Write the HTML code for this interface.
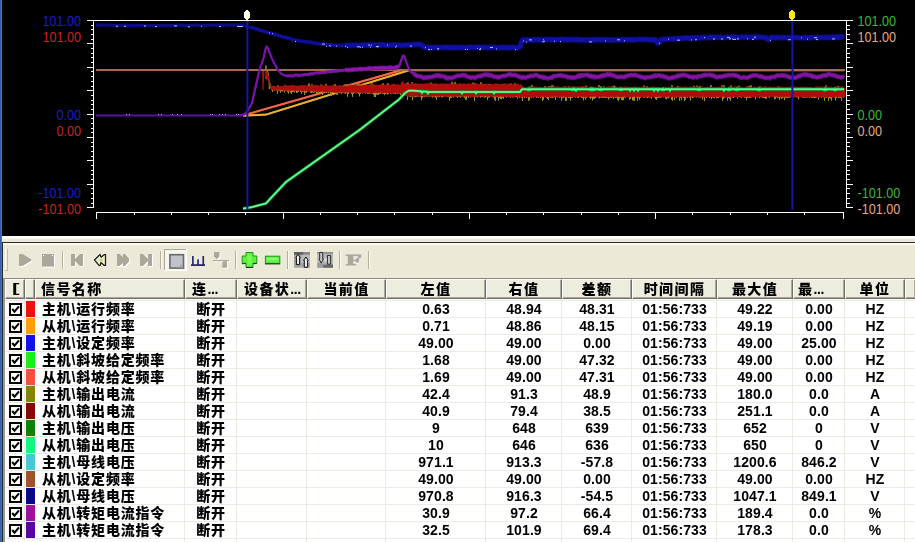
<!DOCTYPE html>
<html><head><meta charset="utf-8"><title>曲线</title>
<style>
html,body{margin:0;padding:0}
body{width:915px;height:542px;overflow:hidden;position:relative;background:#ece9d8;font-family:"Liberation Sans","Noto Sans CJK SC",sans-serif}
.abs{position:absolute}
.hc{position:absolute;top:279px;height:17px;box-sizing:border-box;height:20px;background:#eeebdf;border-top:1px solid #fff;border-left:1px solid #fff;border-right:1px solid #716f64;border-bottom:1px solid #716f64;box-shadow:inset -1px -1px 0 #aca899;font:900 14px/18px "Liberation Sans","Noto Sans CJK SC",sans-serif;letter-spacing:1.4px;color:#000;white-space:nowrap;overflow:hidden}
.gh{position:absolute;left:5px;right:0;height:1px;background:#ecebe1}
.gv{position:absolute;top:299px;bottom:0;width:1px;background:#ecebe1}
.row{position:absolute;left:0;width:915px;height:17px;font:bold 14px/17px "Liberation Sans","Noto Sans CJK SC",sans-serif;letter-spacing:.1px;color:#000;white-space:nowrap}
.cb{position:absolute;left:9px;top:3px;width:13px;height:13px;line-height:0}
.sw{position:absolute;left:26px;top:1px;width:9px;height:16px}
.nm{position:absolute;left:42px;top:1px;font-size:14px;letter-spacing:.8px;font-weight:900}
.c{position:absolute;top:1px;text-align:center}
.zh{font-size:14px;letter-spacing:.8px;font-weight:900}
</style></head><body>
<svg width="915" height="236" viewBox="0 0 915 236" style="position:absolute;left:0;top:0;display:block">
<rect width="915" height="236" fill="#000"/>
<g><polyline points="243.0,115.4 402.0,70.0 844.0,70.0" fill="none" stroke="#e02020" stroke-width="2" />
<polyline points="243.0,115.4 402.0,70.0 844.0,70.0" fill="none" stroke="#f2684c" stroke-width="2" />
<polyline points="243.0,115.8 266.0,114.6 409.0,70.2 844.0,70.2" fill="none" stroke="#30d030" stroke-width="1.6" />
<polyline points="243.0,115.8 266.0,114.6 409.0,70.2 844.0,70.2" fill="none" stroke="#ffa828" stroke-width="2" />
<polyline points="243.0,115.5 247.0,112.0 252.0,103.0 259.4,70.0 260.0,69.5 265.6,69.5 266.0,65.5 266.2,79.0 267.0,70.0 268.5,74.0 269.4,89.0 269.6,82.0 271.0,88.0 271.0,87.5 271.5,89.6 272.0,87.1 272.5,91.8 273.0,86.0 273.5,90.0 274.0,86.6 274.5,90.6 275.0,86.5 275.5,90.2 276.0,87.3 276.5,90.1 277.0,86.9 277.5,93.4 278.0,85.3 278.5,90.4 279.0,87.2 279.5,90.8 280.0,86.8 280.5,92.5 281.0,86.9 281.5,91.0 282.0,86.6 282.5,91.3 283.0,86.9 283.5,90.2 284.0,86.4 284.5,92.3 285.0,84.8 285.5,91.0 286.0,86.8 286.5,91.1 287.0,86.6 287.5,91.7 288.0,86.4 288.5,93.5 289.0,86.0 289.5,90.8 290.0,86.3 290.5,92.5 291.0,86.6 291.5,93.9 292.0,86.1 292.5,91.8 293.0,85.4 293.5,91.8 294.0,86.1 294.5,92.4 295.0,86.1 295.5,90.8 296.0,86.1 296.5,92.8 297.0,86.7 297.5,92.5 298.0,86.4 298.5,91.7 299.0,86.3 299.5,90.8 300.0,86.1 300.5,91.9 301.0,86.5 301.5,93.6 302.0,86.7 302.5,91.5 303.0,86.8 303.5,91.5 304.0,85.6 304.5,94.8 305.0,86.7 305.5,92.5 306.0,86.8 306.5,92.4 307.0,86.4 307.5,91.4 308.0,86.6 308.5,91.2 309.0,83.5 309.5,91.3 310.0,86.8 310.5,92.5 311.0,86.2 311.5,92.8 312.0,84.2 312.5,92.3 313.0,86.6 313.5,92.7 314.0,86.1 314.5,92.3 315.0,86.3 315.5,91.3 316.0,85.9 316.5,94.4 317.0,86.4 317.5,92.8 318.0,86.5 318.5,92.4 319.0,86.1 319.5,92.8 320.0,86.4 320.5,92.6 321.0,84.5 321.5,92.7 322.0,86.4 322.5,95.1 323.0,86.0 323.5,92.2 324.0,85.9 324.5,91.9 325.0,86.3 325.5,92.8 326.0,83.9 326.5,92.7 327.0,86.3 327.5,91.8 328.0,86.2 328.5,93.2 329.0,86.0 329.5,92.1 330.0,86.5 330.5,94.5 331.0,86.4 331.5,96.0 332.0,86.4 332.5,93.3 333.0,85.9 333.5,92.7 334.0,86.8 334.5,92.2 335.0,84.0 335.5,94.1 336.0,86.3 336.5,94.4 337.0,86.0 337.5,94.6 338.0,86.5 338.5,92.9 339.0,86.0 339.5,92.8 340.0,86.3 340.5,93.2 341.0,86.3 341.5,93.6 342.0,85.9 342.5,92.6 343.0,85.8 343.5,92.4 344.0,85.2 344.5,93.3 345.0,84.4 345.5,93.6 346.0,84.2 346.5,92.5 347.0,85.7 347.5,96.6 348.0,86.2 348.5,93.6 349.0,85.2 349.5,92.8 350.0,85.6 350.5,92.4 351.0,86.2 351.5,93.8 352.0,86.1 352.5,96.8 353.0,85.7 353.5,93.6 354.0,83.9 354.5,93.0 355.0,85.7 355.5,92.8 356.0,83.4 356.5,93.5 357.0,86.4 357.5,93.1 358.0,83.3 358.5,93.6 359.0,83.5 359.5,96.3 360.0,86.2 360.5,93.9 361.0,86.4 361.5,92.8 362.0,85.9 362.5,93.4 363.0,86.2 363.5,92.9 364.0,86.3 364.5,92.6 365.0,86.5 365.5,93.4 366.0,84.8 366.5,92.7 367.0,86.0 367.5,93.8 368.0,85.9 368.5,94.0 369.0,85.6 369.5,93.5 370.0,86.1 370.5,93.2 371.0,83.8 371.5,93.3 372.0,83.4 372.5,93.6 373.0,86.1 373.5,94.7 374.0,84.8 374.5,97.0 375.0,85.8 375.5,97.0 376.0,86.0 376.5,94.4 377.0,85.8 377.5,95.0 378.0,85.4 378.5,94.5 379.0,86.2 379.5,93.8 380.0,85.7 380.5,93.7 381.0,85.4 381.5,93.2 382.0,86.1 382.5,93.7 383.0,83.3 383.5,93.7 384.0,85.4 384.5,95.1 385.0,85.4 385.5,94.0 386.0,85.3 386.5,93.9 387.0,86.1 387.5,94.4 388.0,83.2 388.5,93.8 389.0,85.5 389.5,92.9 390.0,85.4 390.5,93.7 391.0,86.1 391.5,93.3 392.0,85.2 392.5,93.2 393.0,85.1 393.5,93.5 394.0,85.4 394.5,93.8 395.0,86.0 395.5,94.1 396.0,85.7 396.5,93.0 397.0,85.1 397.5,94.0 398.0,85.7 398.5,93.7 399.0,85.9 399.5,93.3 400.0,85.1 400.5,95.1 401.0,84.9 401.5,93.8 402.0,82.4 402.5,96.5 403.0,83.7 403.5,94.5 404.0,84.9 404.5,95.8 405.0,84.4 405.5,95.2 406.0,83.4 406.5,96.0 407.0,83.8 407.5,99.8 408.0,82.4 408.5,96.2 409.0,84.3 409.5,96.4 410.0,84.6 410.5,96.9 411.0,84.6 411.5,96.2 412.0,82.1 412.5,100.2 413.0,84.8 413.5,96.3 414.0,84.1 414.5,97.2 415.0,84.1 415.5,96.9 416.0,85.0 416.5,96.7 417.0,84.4 417.5,96.3 418.0,84.9 418.5,96.6 419.0,84.3 419.5,96.4 420.0,84.8 420.5,96.6 421.0,84.5 421.5,100.1 422.0,84.8 422.5,97.6 423.0,84.9 423.5,96.5 424.0,85.0 424.5,97.2 425.0,84.2 425.5,96.7 426.0,84.6 426.5,96.6 427.0,84.1 427.5,96.3 428.0,84.5 428.5,96.4 429.0,84.8 429.5,96.8 430.0,84.3 430.5,96.1 431.0,82.6 431.5,96.8 432.0,85.1 432.5,97.5 433.0,84.3 433.5,96.5 434.0,84.6 434.5,97.1 435.0,84.4 435.5,97.3 436.0,84.6 436.5,99.6 437.0,84.2 437.5,96.6 438.0,84.3 438.5,97.2 439.0,84.9 439.5,97.0 440.0,84.9 440.5,96.2 441.0,84.7 441.5,97.1 442.0,84.7 442.5,97.3 443.0,84.5 443.5,96.3 444.0,84.5 444.5,96.5 445.0,84.2 445.5,96.3 446.0,84.8 446.5,96.5 447.0,84.4 447.5,96.5 448.0,84.9 448.5,96.5 449.0,84.4 449.5,100.5 450.0,85.0 450.5,98.1 451.0,84.2 451.5,98.0 452.0,81.8 452.5,96.4 453.0,83.8 453.5,97.5 454.0,84.2 454.5,96.7 455.0,81.9 455.5,96.3 456.0,84.8 456.5,96.7 457.0,85.2 457.5,97.8 458.0,85.1 458.5,96.5 459.0,84.4 459.5,96.9 460.0,83.6 460.5,97.6 461.0,84.0 461.5,96.3 462.0,84.4 462.5,96.3 463.0,85.0 463.5,96.6 464.0,84.4 464.5,97.5 465.0,84.6 465.5,99.5 466.0,85.0 466.5,99.7 467.0,84.6 467.5,96.3 468.0,84.8 468.5,97.7 469.0,85.0 469.5,97.0 470.0,85.1 470.5,97.4 471.0,84.5 471.5,96.8 472.0,84.9 472.5,96.4 473.0,82.7 473.5,96.6 474.0,83.4 474.5,100.7 475.0,84.3 475.5,96.7 476.0,83.6 476.5,97.0 477.0,84.9 477.5,97.3 478.0,84.5 478.5,96.5 479.0,85.0 479.5,96.9 480.0,85.1 480.5,97.4 481.0,82.2 481.5,96.8 482.0,84.3 482.5,96.7 483.0,84.7 483.5,96.5 484.0,84.5 484.5,97.7 485.0,84.3 485.5,97.2 486.0,84.8 486.5,96.9 487.0,84.9 487.5,99.9 488.0,85.2 488.5,97.3 489.0,84.1 489.5,97.3 490.0,84.8 490.5,96.7 491.0,84.2 491.5,96.6 492.0,85.2 492.5,97.2 493.0,85.0 493.5,97.2 494.0,85.3 494.5,99.5 495.0,85.1 495.5,100.7 496.0,84.8 496.5,97.0 497.0,84.4 497.5,96.7 498.0,85.2 498.5,100.5 499.0,84.6 499.5,97.7 500.0,85.2 500.5,98.9 501.0,84.5 501.5,99.2 502.0,84.9 502.5,97.7 503.0,84.5 503.5,98.6 504.0,84.5 504.5,97.0 505.0,84.5 505.5,96.5 506.0,85.0 506.5,97.4 507.0,85.3 507.5,96.8 508.0,84.6 508.5,96.7 509.0,84.0 509.5,97.0 510.0,84.6 510.5,97.8 511.0,83.5 511.5,96.5 512.0,85.3 512.5,97.3 513.0,85.2 513.5,97.3 514.0,84.8 514.5,97.1 515.0,83.3 515.5,96.8 516.0,84.7 516.5,96.7 517.0,85.4 517.5,98.4 518.0,83.9 518.5,96.5 519.0,85.4 519.5,97.7 520.0,85.4 520.5,97.1 521.0,85.4 521.5,98.0 522.0,86.1 522.5,101.0 523.0,87.4 523.5,96.8 524.0,87.5 524.5,98.2 525.0,88.2 525.5,97.0 526.0,88.3 526.5,98.0 527.0,87.5 527.5,97.1 528.0,87.8 528.5,100.8 529.0,87.5 529.5,100.1 530.0,86.5 530.5,97.1 531.0,87.8 531.5,97.9 532.0,84.9 532.5,97.2 533.0,88.1 533.5,97.5 534.0,87.6 534.5,96.9 535.0,88.4 535.5,97.0 536.0,87.4 536.5,97.6 537.0,88.4 537.5,97.3 538.0,88.0 538.5,97.9 539.0,87.6 539.5,96.6 540.0,87.2 540.5,98.2 541.0,87.8 541.5,96.9 542.0,87.9 542.5,100.8 543.0,88.3 543.5,99.5 544.0,87.6 544.5,97.0 545.0,86.1 545.5,97.1 546.0,88.0 546.5,97.7 547.0,87.5 547.5,99.0 548.0,88.2 548.5,100.1 549.0,86.5 549.5,96.8 550.0,86.3 550.5,97.6 551.0,88.2 551.5,98.0 552.0,85.3 552.5,97.7 553.0,85.4 553.5,97.3 554.0,87.9 554.5,97.1 555.0,88.4 555.5,100.0 556.0,87.6 556.5,97.0 557.0,88.0 557.5,97.4 558.0,87.8 558.5,96.9 559.0,88.4 559.5,97.7 560.0,87.5 560.5,97.1 561.0,88.1 561.5,100.7 562.0,87.7 562.5,98.1 563.0,87.6 563.5,97.9 564.0,87.7 564.5,97.1 565.0,86.2 565.5,100.7 566.0,88.3 566.5,100.8 567.0,88.3 567.5,96.8 568.0,87.8 568.5,97.7 569.0,86.3 569.5,97.8 570.0,87.5 570.5,100.5 571.0,87.5 571.5,97.5 572.0,88.3 572.5,97.8 573.0,87.6 573.5,97.0 574.0,88.1 574.5,96.9 575.0,88.0 575.5,97.8 576.0,87.7 576.5,97.1 577.0,87.9 577.5,97.5 578.0,87.0 578.5,97.8 579.0,87.7 579.5,96.9 580.0,88.3 580.5,96.9 581.0,87.7 581.5,98.1 582.0,86.7 582.5,97.8 583.0,86.7 583.5,100.3 584.0,87.5 584.5,97.6 585.0,87.9 585.5,99.5 586.0,85.6 586.5,97.8 587.0,88.0 587.5,97.2 588.0,88.3 588.5,96.6 589.0,87.5 589.5,97.4 590.0,87.5 590.5,98.7 591.0,87.6 591.5,97.6 592.0,88.1 592.5,100.4 593.0,87.7 593.5,98.6 594.0,87.8 594.5,98.7 595.0,88.2 595.5,98.0 596.0,87.6 596.5,97.3 597.0,88.1 597.5,96.8 598.0,88.2 598.5,97.7 599.0,85.0 599.5,98.3 600.0,87.6 600.5,97.3 601.0,86.2 601.5,97.5 602.0,88.4 602.5,97.8 603.0,87.9 603.5,97.3 604.0,86.3 604.5,97.7 605.0,88.0 605.5,97.7 606.0,88.2 606.5,97.9 607.0,87.7 607.5,97.6 608.0,87.9 608.5,99.4 609.0,86.9 609.5,97.7 610.0,88.1 610.5,97.3 611.0,88.0 611.5,98.0 612.0,86.1 612.5,97.2 613.0,87.4 613.5,99.0 614.0,85.7 614.5,97.4 615.0,86.4 615.5,97.7 616.0,87.8 616.5,97.4 617.0,87.5 617.5,99.7 618.0,87.6 618.5,101.0 619.0,88.3 619.5,98.4 620.0,86.9 620.5,97.6 621.0,88.1 621.5,99.9 622.0,87.9 622.5,100.2 623.0,88.2 623.5,100.1 624.0,87.8 624.5,97.4 625.0,87.4 625.5,97.6 626.0,87.6 626.5,97.0 627.0,88.3 627.5,97.1 628.0,88.1 628.5,97.0 629.0,88.2 629.5,99.8 630.0,88.2 630.5,98.8 631.0,87.8 631.5,97.1 632.0,87.5 632.5,100.3 633.0,87.6 633.5,100.3 634.0,88.4 634.5,100.9 635.0,88.1 635.5,97.2 636.0,87.6 636.5,97.3 637.0,87.6 637.5,100.6 638.0,87.6 638.5,97.9 639.0,87.6 639.5,99.7 640.0,87.7 640.5,97.9 641.0,88.1 641.5,97.2 642.0,88.3 642.5,96.8 643.0,87.9 643.5,97.9 644.0,85.5 644.5,97.4 645.0,87.6 645.5,97.2 646.0,88.3 646.5,97.6 647.0,86.3 647.5,98.0 648.0,87.4 648.5,97.3 649.0,88.4 649.5,97.5 650.0,87.5 650.5,97.3 651.0,87.6 651.5,98.6 652.0,87.8 652.5,97.0 653.0,88.0 653.5,97.0 654.0,87.4 654.5,97.8 655.0,88.1 655.5,99.2 656.0,87.6 656.5,99.9 657.0,87.9 657.5,98.0 658.0,87.7 658.5,97.5 659.0,87.6 659.5,97.5 660.0,87.8 660.5,97.5 661.0,88.2 661.5,97.3 662.0,88.3 662.5,96.8 663.0,87.5 663.5,97.2 664.0,87.6 664.5,97.0 665.0,88.0 665.5,98.5 666.0,87.5 666.5,99.2 667.0,88.0 667.5,97.5 668.0,88.0 668.5,98.3 669.0,87.5 669.5,97.3 670.0,88.3 670.5,96.9 671.0,88.3 671.5,99.7 672.0,85.0 672.5,100.5 673.0,88.3 673.5,97.0 674.0,88.2 674.5,100.1 675.0,87.5 675.5,96.7 676.0,87.7 676.5,98.0 677.0,87.4 677.5,96.6 678.0,86.1 678.5,96.7 679.0,87.7 679.5,100.5 680.0,88.3 680.5,97.5 681.0,87.7 681.5,100.2 682.0,87.8 682.5,97.2 683.0,87.6 683.5,97.8 684.0,88.1 684.5,101.0 685.0,87.6 685.5,99.3 686.0,87.6 686.5,97.1 687.0,87.5 687.5,97.6 688.0,87.5 688.5,97.0 689.0,87.5 689.5,97.5 690.0,87.5 690.5,100.3 691.0,87.5 691.5,97.0 692.0,87.6 692.5,98.0 693.0,88.3 693.5,97.8 694.0,85.8 694.5,97.0 695.0,87.7 695.5,96.9 696.0,87.6 696.5,97.3 697.0,85.6 697.5,96.9 698.0,87.5 698.5,97.4 699.0,87.8 699.5,97.5 700.0,85.9 700.5,97.4 701.0,87.9 701.5,96.8 702.0,88.0 702.5,99.4 703.0,88.2 703.5,97.1 704.0,88.4 704.5,101.1 705.0,87.9 705.5,97.0 706.0,88.0 706.5,97.8 707.0,87.4 707.5,96.8 708.0,87.8 708.5,96.8 709.0,87.5 709.5,98.0 710.0,88.3 710.5,97.2 711.0,85.0 711.5,99.1 712.0,87.4 712.5,97.2 713.0,88.2 713.5,98.1 714.0,88.4 714.5,98.2 715.0,87.5 715.5,96.7 716.0,87.7 716.5,98.1 717.0,87.9 717.5,98.0 718.0,88.1 718.5,97.7 719.0,87.3 719.5,97.2 720.0,88.2 720.5,97.2 721.0,88.4 721.5,96.9 722.0,85.2 722.5,100.8 723.0,87.5 723.5,98.6 724.0,85.1 724.5,97.5 725.0,88.1 725.5,97.3 726.0,88.3 726.5,96.9 727.0,87.8 727.5,100.5 728.0,88.0 728.5,97.8 729.0,88.1 729.5,98.8 730.0,87.5 730.5,101.0 731.0,85.3 731.5,96.9 732.0,88.1 732.5,97.5 733.0,87.4 733.5,98.0 734.0,87.4 734.5,96.7 735.0,88.1 735.5,96.6 736.0,88.1 736.5,96.6 737.0,87.9 737.5,98.6 738.0,88.2 738.5,96.8 739.0,85.7 739.5,96.9 740.0,88.1 740.5,97.3 741.0,88.2 741.5,97.7 742.0,87.8 742.5,96.9 743.0,88.0 743.5,96.7 744.0,88.1 744.5,97.9 745.0,88.4 745.5,97.3 746.0,88.1 746.5,100.3 747.0,88.2 747.5,97.5 748.0,86.6 748.5,97.4 749.0,85.9 749.5,97.9 750.0,87.7 750.5,97.7 751.0,85.3 751.5,97.3 752.0,87.9 752.5,96.6 753.0,88.2 753.5,97.1 754.0,87.6 754.5,97.0 755.0,88.2 755.5,99.3 756.0,87.9 756.5,96.8 757.0,87.7 757.5,97.2 758.0,87.9 758.5,97.1 759.0,88.3 759.5,97.9 760.0,86.4 760.5,96.8 761.0,87.5 761.5,97.2 762.0,87.9 762.5,98.0 763.0,88.1 763.5,98.1 764.0,87.4 764.5,98.0 765.0,87.6 765.5,98.9 766.0,87.5 766.5,98.5 767.0,88.0 767.5,96.7 768.0,87.9 768.5,97.2 769.0,87.6 769.5,97.5 770.0,87.5 770.5,96.7 771.0,88.1 771.5,97.0 772.0,87.5 772.5,97.0 773.0,88.0 773.5,97.0 774.0,87.8 774.5,99.3 775.0,87.9 775.5,98.7 776.0,88.3 776.5,97.2 777.0,88.0 777.5,97.7 778.0,86.5 778.5,97.5 779.0,87.7 779.5,99.8 780.0,87.9 780.5,97.3 781.0,88.2 781.5,98.9 782.0,87.8 782.5,98.2 783.0,88.2 783.5,97.3 784.0,87.4 784.5,100.1 785.0,88.2 785.5,97.3 786.0,87.0 786.5,97.7 787.0,87.6 787.5,97.7 788.0,87.2 788.5,97.6 789.0,87.6 789.5,97.4 790.0,87.7 790.5,97.3 791.0,87.7 791.5,96.8 792.0,88.4 792.5,97.5 793.0,87.4 793.5,97.2 794.0,87.5 794.5,97.2 795.0,87.9 795.5,97.0 796.0,87.8 796.5,97.1 797.0,87.6 797.5,97.3 798.0,87.3 798.5,99.2 799.0,88.3 799.5,97.1 800.0,87.6 800.5,96.9 801.0,87.5 801.5,96.8 802.0,87.9 802.5,97.8 803.0,87.4 803.5,97.4 804.0,88.0 804.5,97.5 805.0,87.5 805.5,97.4 806.0,87.1 806.5,97.4 807.0,87.5 807.5,97.3 808.0,87.8 808.5,97.1 809.0,87.6 809.5,98.0 810.0,87.6 810.5,96.8 811.0,87.7 811.5,98.1 812.0,88.0 812.5,97.9 813.0,87.9 813.5,97.4 814.0,87.8 814.5,98.1 815.0,88.4 815.5,97.8 816.0,87.7 816.5,98.0 817.0,87.8 817.5,96.9 818.0,87.8 818.5,99.5 819.0,87.4 819.5,97.2 820.0,87.9 820.5,96.8 821.0,87.8 821.5,97.8 822.0,87.6 822.5,96.7 823.0,88.1 823.5,97.1 824.0,87.5 824.5,100.7 825.0,88.1 825.5,97.2 826.0,85.3 826.5,98.0 827.0,87.8 827.5,96.8 828.0,87.5 828.5,100.6 829.0,88.1 829.5,98.0 830.0,87.5 830.5,98.4 831.0,88.2 831.5,100.5 832.0,87.6 832.5,97.4 833.0,88.2 833.5,97.0 834.0,88.3 834.5,97.2 835.0,88.3 835.5,100.3 836.0,88.2 836.5,97.9 837.0,88.4 837.5,97.1 838.0,85.9 838.5,97.8 839.0,88.3 839.5,97.9 840.0,88.2 840.5,97.7 841.0,87.4 841.5,100.9 842.0,88.2 842.5,96.8 843.0,88.1 843.5,97.5 844.0,88.2 844.5,96.9" fill="none" stroke="#a09028" stroke-width="1" />
<polyline points="243.0,115.5 247.0,112.0 252.0,103.0 259.4,70.0 260.0,69.8 262.8,69.8 263.0,90.0 263.7,71.0 266.6,70.0 266.9,80.5 268.0,75.0 270.0,86.0 271.0,88.0 271.0,85.7 271.5,89.4 272.0,86.2 272.5,89.8 273.0,86.6 273.5,90.1 274.0,86.4 274.5,90.1 275.0,86.0 275.5,89.8 276.0,86.3 276.5,89.6 277.0,86.6 277.5,90.4 278.0,86.4 278.5,90.3 279.0,86.7 279.5,90.2 280.0,86.2 280.5,90.2 281.0,86.3 281.5,89.8 282.0,86.3 282.5,90.0 283.0,86.6 283.5,90.6 284.0,86.3 284.5,90.3 285.0,85.1 285.5,90.7 286.0,85.1 286.5,90.9 287.0,86.4 287.5,90.3 288.0,86.6 288.5,90.8 289.0,85.4 289.5,90.5 290.0,85.9 290.5,90.9 291.0,85.3 291.5,90.5 292.0,85.1 292.5,90.6 293.0,85.4 293.5,90.5 294.0,86.3 294.5,91.2 295.0,85.2 295.5,91.1 296.0,86.5 296.5,90.4 297.0,86.2 297.5,90.6 298.0,86.0 298.5,90.8 299.0,86.4 299.5,90.8 300.0,85.4 300.5,90.7 301.0,85.0 301.5,91.1 302.0,85.2 302.5,90.8 303.0,85.7 303.5,91.3 304.0,85.9 304.5,90.7 305.0,85.0 305.5,91.5 306.0,86.0 306.5,90.8 307.0,84.9 307.5,91.4 308.0,86.4 308.5,91.0 309.0,86.3 309.5,91.6 310.0,86.1 310.5,91.8 311.0,85.1 311.5,91.0 312.0,85.2 312.5,91.3 313.0,85.1 313.5,91.8 314.0,86.0 314.5,91.1 315.0,84.8 315.5,91.5 316.0,84.8 316.5,91.8 317.0,85.1 317.5,92.0 318.0,85.3 318.5,91.6 319.0,86.4 319.5,91.9 320.0,85.7 320.5,91.8 321.0,84.8 321.5,91.4 322.0,85.1 322.5,91.4 323.0,85.2 323.5,92.2 324.0,86.0 324.5,91.9 325.0,84.7 325.5,92.1 326.0,85.5 326.5,91.7 327.0,86.3 327.5,91.9 328.0,85.7 328.5,91.8 329.0,85.9 329.5,91.7 330.0,85.2 330.5,92.3 331.0,86.0 331.5,91.9 332.0,85.5 332.5,92.1 333.0,84.7 333.5,92.1 334.0,85.9 334.5,92.7 335.0,86.2 335.5,92.4 336.0,85.8 336.5,92.7 337.0,85.4 337.5,92.6 338.0,86.1 338.5,92.6 339.0,85.3 339.5,92.4 340.0,85.0 340.5,92.8 341.0,86.2 341.5,92.3 342.0,85.7 342.5,92.2 343.0,86.3 343.5,92.3 344.0,86.0 344.5,92.8 345.0,85.5 345.5,92.2 346.0,85.7 346.5,92.5 347.0,85.7 347.5,92.3 348.0,86.2 348.5,92.1 349.0,84.5 349.5,92.9 350.0,86.1 350.5,92.9 351.0,84.5 351.5,92.7 352.0,86.0 352.5,92.6 353.0,85.4 353.5,92.4 354.0,85.2 354.5,92.2 355.0,84.5 355.5,92.8 356.0,85.1 356.5,93.1 357.0,85.0 357.5,92.5 358.0,85.7 358.5,92.4 359.0,86.1 359.5,93.0 360.0,84.6 360.5,92.6 361.0,85.8 361.5,92.9 362.0,84.6 362.5,93.2 363.0,85.8 363.5,93.1 364.0,84.6 364.5,93.1 365.0,85.5 365.5,92.5 366.0,84.6 366.5,92.7 367.0,85.4 367.5,92.9 368.0,85.4 368.5,93.2 369.0,85.6 369.5,92.4 370.0,85.0 370.5,93.0 371.0,84.5 371.5,93.1 372.0,84.3 372.5,93.4 373.0,85.1 373.5,92.9 374.0,85.7 374.5,92.8 375.0,84.9 375.5,92.5 376.0,84.7 376.5,92.6 377.0,85.1 377.5,93.5 378.0,85.7 378.5,92.5 379.0,85.1 379.5,92.7 380.0,84.6 380.5,92.5 381.0,84.3 381.5,93.4 382.0,84.4 382.5,93.0 383.0,85.3 383.5,93.2 384.0,84.9 384.5,93.0 385.0,85.2 385.5,93.0 386.0,84.6 386.5,93.4 387.0,84.1 387.5,92.8 388.0,85.2 388.5,93.1 389.0,84.7 389.5,93.0 390.0,85.4 390.5,92.8 391.0,85.1 391.5,93.1 392.0,84.0 392.5,93.6 393.0,84.1 393.5,93.7 394.0,83.9 394.5,93.3 395.0,84.2 395.5,92.8 396.0,84.4 396.5,93.4 397.0,85.1 397.5,93.3 398.0,83.9 398.5,93.4 399.0,85.0 399.5,93.7 400.0,85.3 400.5,93.5 401.0,84.4 401.5,93.9 402.0,82.1 402.5,94.1 403.0,80.9 403.5,94.5 404.0,84.0 404.5,95.4 405.0,83.6 405.5,95.8 406.0,84.1 406.5,95.9 407.0,84.1 407.5,96.4 408.0,84.2 408.5,95.9 409.0,83.7 409.5,96.4 410.0,84.5 410.5,96.2 411.0,84.5 411.5,96.3 412.0,83.1 412.5,96.4 413.0,83.3 413.5,96.6 414.0,84.4 414.5,96.8 415.0,83.3 415.5,95.9 416.0,83.1 416.5,96.2 417.0,84.3 417.5,96.8 418.0,83.6 418.5,96.6 419.0,84.4 419.5,96.6 420.0,84.6 420.5,96.1 421.0,84.0 421.5,95.9 422.0,83.6 422.5,96.1 423.0,84.1 423.5,96.6 424.0,83.9 424.5,96.8 425.0,83.6 425.5,96.8 426.0,83.7 426.5,96.8 427.0,83.1 427.5,96.1 428.0,83.4 428.5,96.2 429.0,83.3 429.5,96.6 430.0,83.2 430.5,96.0 431.0,84.0 431.5,96.6 432.0,83.0 432.5,96.6 433.0,84.6 433.5,96.5 434.0,84.5 434.5,96.5 435.0,83.3 435.5,96.0 436.0,83.1 436.5,96.6 437.0,84.3 437.5,96.1 438.0,83.9 438.5,96.8 439.0,83.7 439.5,96.1 440.0,84.7 440.5,96.1 441.0,83.3 441.5,96.1 442.0,83.8 442.5,96.2 443.0,83.5 443.5,96.3 444.0,84.5 444.5,96.8 445.0,83.8 445.5,96.7 446.0,83.3 446.5,96.9 447.0,84.8 447.5,96.3 448.0,84.5 448.5,96.5 449.0,83.2 449.5,96.8 450.0,84.7 450.5,96.2 451.0,83.3 451.5,96.7 452.0,84.1 452.5,96.5 453.0,84.5 453.5,96.8 454.0,84.1 454.5,96.9 455.0,83.7 455.5,96.1 456.0,84.2 456.5,96.2 457.0,83.2 457.5,96.6 458.0,84.7 458.5,96.2 459.0,84.2 459.5,96.5 460.0,83.8 460.5,96.4 461.0,84.2 461.5,96.0 462.0,83.8 462.5,96.4 463.0,84.8 463.5,96.5 464.0,83.1 464.5,96.1 465.0,84.6 465.5,96.7 466.0,84.4 466.5,96.3 467.0,84.0 467.5,96.3 468.0,83.8 468.5,96.6 469.0,83.1 469.5,97.1 470.0,84.8 470.5,96.6 471.0,83.5 471.5,97.0 472.0,83.5 472.5,96.7 473.0,83.7 473.5,96.5 474.0,84.4 474.5,96.9 475.0,83.3 475.5,97.0 476.0,83.7 476.5,96.4 477.0,83.5 477.5,96.8 478.0,84.0 478.5,96.7 479.0,84.3 479.5,96.7 480.0,84.2 480.5,96.2 481.0,84.3 481.5,96.4 482.0,83.1 482.5,96.6 483.0,84.3 483.5,96.4 484.0,84.5 484.5,96.5 485.0,84.7 485.5,96.1 486.0,83.4 486.5,96.6 487.0,84.1 487.5,96.7 488.0,84.4 488.5,96.3 489.0,84.8 489.5,96.5 490.0,84.4 490.5,96.9 491.0,84.0 491.5,97.1 492.0,84.4 492.5,97.1 493.0,83.9 493.5,96.3 494.0,84.7 494.5,96.8 495.0,83.2 495.5,96.5 496.0,83.6 496.5,96.6 497.0,83.4 497.5,96.3 498.0,84.1 498.5,97.1 499.0,84.5 499.5,96.5 500.0,85.0 500.5,96.4 501.0,84.5 501.5,96.9 502.0,84.6 502.5,96.6 503.0,84.7 503.5,96.8 504.0,83.5 504.5,96.9 505.0,84.7 505.5,97.0 506.0,83.3 506.5,96.8 507.0,84.9 507.5,97.0 508.0,83.5 508.5,96.6 509.0,84.8 509.5,96.4 510.0,84.1 510.5,97.1 511.0,83.9 511.5,97.2 512.0,84.7 512.5,96.6 513.0,83.7 513.5,96.9 514.0,84.3 514.5,96.9 515.0,84.5 515.5,96.3 516.0,84.3 516.5,96.3 517.0,84.0 517.5,96.6 518.0,84.2 518.5,96.9 519.0,84.6 519.5,96.8 520.0,85.1 520.5,97.2 521.0,84.1 521.5,97.3 522.0,86.4 522.5,97.0 523.0,86.7 523.5,96.7 524.0,87.8 524.5,96.6 525.0,87.7 525.5,97.2 526.0,87.8 526.5,97.2 527.0,87.2 527.5,96.9 528.0,86.9 528.5,97.0 529.0,86.8 529.5,97.0 530.0,87.4 530.5,97.1 531.0,87.5 531.5,97.1 532.0,86.6 532.5,97.2 533.0,87.4 533.5,97.2 534.0,86.2 534.5,96.9 535.0,87.5 535.5,96.9 536.0,86.3 536.5,96.5 537.0,88.0 537.5,96.9 538.0,86.8 538.5,97.2 539.0,87.3 539.5,97.4 540.0,87.6 540.5,97.2 541.0,87.8 541.5,96.4 542.0,87.8 542.5,96.5 543.0,87.1 543.5,97.0 544.0,87.7 544.5,97.3 545.0,87.3 545.5,96.5 546.0,87.7 546.5,97.1 547.0,86.3 547.5,96.6 548.0,87.9 548.5,97.2 549.0,87.6 549.5,97.4 550.0,87.1 550.5,97.0 551.0,87.4 551.5,97.2 552.0,87.2 552.5,96.7 553.0,86.4 553.5,96.5 554.0,86.7 554.5,96.5 555.0,86.8 555.5,96.8 556.0,86.4 556.5,96.5 557.0,87.0 557.5,96.8 558.0,86.3 558.5,97.3 559.0,86.9 559.5,96.6 560.0,87.5 560.5,96.7 561.0,87.2 561.5,96.6 562.0,87.6 562.5,97.2 563.0,86.8 563.5,96.7 564.0,86.2 564.5,96.6 565.0,87.0 565.5,96.6 566.0,86.4 566.5,97.3 567.0,87.5 567.5,97.2 568.0,86.5 568.5,96.7 569.0,87.4 569.5,96.9 570.0,86.4 570.5,96.6 571.0,86.8 571.5,97.0 572.0,87.2 572.5,97.0 573.0,86.4 573.5,96.6 574.0,86.4 574.5,96.8 575.0,86.6 575.5,97.3 576.0,87.7 576.5,97.3 577.0,86.2 577.5,96.7 578.0,88.0 578.5,96.5 579.0,86.2 579.5,96.4 580.0,86.4 580.5,96.6 581.0,86.7 581.5,96.5 582.0,87.7 582.5,97.1 583.0,87.8 583.5,96.7 584.0,86.3 584.5,97.1 585.0,86.4 585.5,97.4 586.0,87.9 586.5,96.6 587.0,86.6 587.5,97.1 588.0,87.9 588.5,96.9 589.0,87.6 589.5,96.8 590.0,87.8 590.5,96.4 591.0,86.2 591.5,96.7 592.0,86.4 592.5,96.5 593.0,87.1 593.5,96.5 594.0,87.2 594.5,96.6 595.0,86.8 595.5,96.5 596.0,86.7 596.5,96.9 597.0,87.8 597.5,96.8 598.0,87.1 598.5,97.3 599.0,87.4 599.5,96.6 600.0,86.3 600.5,97.3 601.0,86.7 601.5,96.7 602.0,87.7 602.5,96.7 603.0,87.9 603.5,96.4 604.0,87.1 604.5,96.8 605.0,87.0 605.5,96.8 606.0,88.0 606.5,97.1 607.0,86.8 607.5,96.9 608.0,87.0 608.5,97.1 609.0,86.2 609.5,97.3 610.0,86.7 610.5,96.8 611.0,87.4 611.5,96.8 612.0,86.2 612.5,96.8 613.0,87.3 613.5,96.8 614.0,87.7 614.5,97.4 615.0,88.0 615.5,97.0 616.0,86.3 616.5,96.7 617.0,86.9 617.5,96.8 618.0,87.6 618.5,96.6 619.0,87.8 619.5,97.2 620.0,86.6 620.5,97.3 621.0,87.9 621.5,97.1 622.0,87.4 622.5,97.0 623.0,87.0 623.5,96.7 624.0,86.3 624.5,96.4 625.0,86.7 625.5,97.3 626.0,87.1 626.5,97.0 627.0,86.2 627.5,96.6 628.0,86.9 628.5,97.1 629.0,87.3 629.5,97.1 630.0,87.3 630.5,96.9 631.0,86.9 631.5,97.1 632.0,87.4 632.5,97.0 633.0,87.0 633.5,96.6 634.0,86.9 634.5,96.7 635.0,86.4 635.5,96.9 636.0,86.7 636.5,96.9 637.0,87.1 637.5,96.6 638.0,87.7 638.5,97.3 639.0,87.0 639.5,96.9 640.0,87.1 640.5,97.2 641.0,87.6 641.5,96.6 642.0,86.5 642.5,96.9 643.0,86.8 643.5,97.2 644.0,86.4 644.5,97.3 645.0,87.9 645.5,96.8 646.0,86.5 646.5,97.2 647.0,87.8 647.5,96.6 648.0,87.5 648.5,96.5 649.0,87.4 649.5,97.2 650.0,87.1 650.5,96.9 651.0,87.8 651.5,96.8 652.0,86.2 652.5,97.1 653.0,87.2 653.5,96.9 654.0,86.6 654.5,97.2 655.0,87.7 655.5,97.1 656.0,87.3 656.5,96.9 657.0,87.6 657.5,96.8 658.0,87.4 658.5,96.8 659.0,88.0 659.5,96.6 660.0,87.0 660.5,96.5 661.0,87.7 661.5,97.1 662.0,87.5 662.5,96.7 663.0,87.6 663.5,97.2 664.0,87.8 664.5,97.0 665.0,86.5 665.5,96.6 666.0,87.2 666.5,97.2 667.0,86.9 667.5,96.8 668.0,87.9 668.5,96.8 669.0,87.3 669.5,97.1 670.0,87.5 670.5,96.8 671.0,86.8 671.5,97.2 672.0,87.4 672.5,96.8 673.0,87.0 673.5,97.3 674.0,87.7 674.5,97.4 675.0,86.7 675.5,96.8 676.0,86.8 676.5,96.7 677.0,87.9 677.5,97.2 678.0,87.3 678.5,96.9 679.0,87.1 679.5,97.3 680.0,86.6 680.5,96.4 681.0,86.9 681.5,96.9 682.0,87.2 682.5,97.2 683.0,87.3 683.5,96.9 684.0,86.4 684.5,96.8 685.0,87.1 685.5,96.9 686.0,86.5 686.5,97.1 687.0,86.7 687.5,96.8 688.0,87.9 688.5,97.1 689.0,87.0 689.5,97.2 690.0,86.6 690.5,96.5 691.0,87.6 691.5,96.5 692.0,86.5 692.5,96.5 693.0,87.8 693.5,97.2 694.0,87.0 694.5,96.5 695.0,86.8 695.5,97.1 696.0,87.1 696.5,96.5 697.0,86.8 697.5,96.8 698.0,86.9 698.5,97.4 699.0,86.5 699.5,97.3 700.0,87.7 700.5,96.7 701.0,87.1 701.5,96.4 702.0,86.2 702.5,96.7 703.0,87.5 703.5,96.7 704.0,87.5 704.5,97.3 705.0,87.0 705.5,96.9 706.0,87.2 706.5,96.5 707.0,87.5 707.5,97.3 708.0,86.6 708.5,97.3 709.0,87.5 709.5,96.6 710.0,87.9 710.5,96.9 711.0,87.3 711.5,96.9 712.0,87.1 712.5,97.0 713.0,87.3 713.5,97.2 714.0,87.6 714.5,97.3 715.0,87.0 715.5,96.5 716.0,87.4 716.5,96.9 717.0,87.3 717.5,97.0 718.0,87.4 718.5,96.7 719.0,86.6 719.5,96.7 720.0,86.7 720.5,97.2 721.0,86.9 721.5,96.9 722.0,86.3 722.5,96.8 723.0,86.4 723.5,96.5 724.0,87.2 724.5,97.0 725.0,87.9 725.5,97.3 726.0,87.9 726.5,97.0 727.0,87.7 727.5,97.3 728.0,87.0 728.5,97.2 729.0,87.1 729.5,97.1 730.0,86.8 730.5,96.7 731.0,87.6 731.5,97.2 732.0,87.7 732.5,97.3 733.0,87.6 733.5,96.5 734.0,87.8 734.5,97.2 735.0,86.3 735.5,96.8 736.0,86.8 736.5,96.7 737.0,86.4 737.5,97.1 738.0,87.7 738.5,96.5 739.0,86.7 739.5,96.4 740.0,86.5 740.5,96.7 741.0,87.6 741.5,97.0 742.0,87.4 742.5,97.0 743.0,87.7 743.5,97.3 744.0,87.4 744.5,97.2 745.0,87.7 745.5,97.2 746.0,86.2 746.5,96.8 747.0,87.9 747.5,96.8 748.0,86.8 748.5,96.6 749.0,87.0 749.5,96.5 750.0,87.2 750.5,97.1 751.0,87.2 751.5,97.1 752.0,87.8 752.5,97.2 753.0,87.8 753.5,97.3 754.0,86.2 754.5,97.3 755.0,87.1 755.5,96.7 756.0,87.4 756.5,97.2 757.0,87.1 757.5,97.3 758.0,87.8 758.5,96.9 759.0,86.4 759.5,97.0 760.0,87.0 760.5,96.5 761.0,87.7 761.5,96.7 762.0,86.4 762.5,97.2 763.0,87.6 763.5,97.3 764.0,87.9 764.5,97.0 765.0,86.3 765.5,96.7 766.0,86.3 766.5,97.1 767.0,87.9 767.5,96.7 768.0,87.2 768.5,96.6 769.0,86.7 769.5,96.6 770.0,86.6 770.5,96.7 771.0,87.9 771.5,97.0 772.0,87.8 772.5,97.0 773.0,86.6 773.5,97.0 774.0,87.2 774.5,96.4 775.0,87.1 775.5,96.5 776.0,86.8 776.5,96.5 777.0,87.0 777.5,96.8 778.0,87.3 778.5,97.1 779.0,87.7 779.5,96.6 780.0,86.3 780.5,96.7 781.0,86.5 781.5,97.3 782.0,87.1 782.5,96.5 783.0,87.8 783.5,97.3 784.0,87.8 784.5,96.9 785.0,87.0 785.5,96.5 786.0,87.2 786.5,96.6 787.0,87.0 787.5,96.9 788.0,87.3 788.5,96.6 789.0,87.3 789.5,96.6 790.0,87.8 790.5,96.6 791.0,86.4 791.5,96.9 792.0,86.4 792.5,96.4 793.0,86.3 793.5,96.9 794.0,86.6 794.5,97.0 795.0,86.8 795.5,96.6 796.0,86.6 796.5,96.6 797.0,87.5 797.5,96.4 798.0,87.3 798.5,96.9 799.0,87.5 799.5,97.3 800.0,87.8 800.5,97.0 801.0,87.6 801.5,97.0 802.0,86.6 802.5,97.1 803.0,87.9 803.5,96.6 804.0,86.9 804.5,97.4 805.0,87.9 805.5,97.0 806.0,86.8 806.5,97.2 807.0,87.4 807.5,97.2 808.0,87.2 808.5,97.3 809.0,88.0 809.5,97.3 810.0,87.3 810.5,96.8 811.0,87.8 811.5,96.6 812.0,86.7 812.5,97.1 813.0,87.7 813.5,96.7 814.0,87.7 814.5,96.6 815.0,87.6 815.5,96.7 816.0,86.2 816.5,97.4 817.0,86.6 817.5,96.9 818.0,87.1 818.5,97.2 819.0,86.4 819.5,97.2 820.0,86.9 820.5,96.6 821.0,86.9 821.5,97.2 822.0,86.6 822.5,96.5 823.0,86.7 823.5,96.7 824.0,87.7 824.5,97.4 825.0,86.8 825.5,97.1 826.0,87.8 826.5,97.2 827.0,86.3 827.5,97.3 828.0,86.7 828.5,97.2 829.0,86.6 829.5,97.0 830.0,87.2 830.5,97.2 831.0,86.6 831.5,97.3 832.0,87.5 832.5,97.4 833.0,87.0 833.5,97.3 834.0,87.8 834.5,97.4 835.0,86.6 835.5,96.7 836.0,86.5 836.5,96.6 837.0,87.6 837.5,96.9 838.0,87.6 838.5,96.9 839.0,86.4 839.5,97.1 840.0,86.7 840.5,96.8 841.0,86.6 841.5,97.2 842.0,86.8 842.5,97.3 843.0,86.5 843.5,96.8 844.0,87.8 844.5,97.1" fill="none" stroke="#b00c0c" stroke-width="1.25" />
<polygon points="272.0,87.3 273.0,87.3 274.0,87.2 275.0,87.2 276.0,87.2 277.0,87.2 278.0,87.1 279.0,87.1 280.0,87.1 281.0,87.0 282.0,87.0 283.0,87.0 284.0,87.0 285.0,86.9 286.0,86.9 287.0,86.9 288.0,86.8 289.0,86.8 290.0,86.8 291.0,86.8 292.0,86.8 293.0,86.8 294.0,86.8 295.0,86.7 296.0,86.7 297.0,86.7 298.0,86.7 299.0,86.7 300.0,86.7 301.0,86.7 302.0,86.7 303.0,86.7 304.0,86.7 305.0,86.7 306.0,86.7 307.0,86.7 308.0,86.7 309.0,86.7 310.0,86.7 311.0,86.7 312.0,86.7 313.0,86.7 314.0,86.7 315.0,86.7 316.0,86.7 317.0,86.7 318.0,86.7 319.0,86.7 320.0,86.7 321.0,86.6 322.0,86.6 323.0,86.6 324.0,86.6 325.0,86.6 326.0,86.6 327.0,86.6 328.0,86.6 329.0,86.6 330.0,86.6 331.0,86.6 332.0,86.6 333.0,86.6 334.0,86.6 335.0,86.6 336.0,86.6 337.0,86.6 338.0,86.6 339.0,86.6 340.0,86.6 341.0,86.6 342.0,86.6 343.0,86.6 344.0,86.5 345.0,86.5 346.0,86.5 347.0,86.5 348.0,86.5 349.0,86.5 350.0,86.5 351.0,86.5 352.0,86.4 353.0,86.4 354.0,86.4 355.0,86.4 356.0,86.4 357.0,86.4 358.0,86.4 359.0,86.3 360.0,86.3 361.0,86.3 362.0,86.3 363.0,86.3 364.0,86.3 365.0,86.3 366.0,86.3 367.0,86.2 368.0,86.2 369.0,86.2 370.0,86.2 371.0,86.2 372.0,86.2 373.0,86.2 374.0,86.1 375.0,86.1 376.0,86.1 377.0,86.1 378.0,86.1 379.0,86.1 380.0,86.1 381.0,86.1 382.0,86.0 383.0,86.0 384.0,86.0 385.0,86.0 386.0,86.0 387.0,86.0 388.0,86.0 389.0,85.9 390.0,85.9 391.0,85.9 392.0,85.9 393.0,85.9 394.0,85.9 395.0,85.9 396.0,85.9 397.0,85.8 398.0,85.8 399.0,85.8 400.0,85.8 401.0,85.7 402.0,85.5 403.0,85.4 404.0,85.2 405.0,85.1 406.0,84.9 407.0,84.8 408.0,84.8 409.0,84.8 410.0,84.8 411.0,84.8 412.0,84.8 413.0,84.8 414.0,84.8 415.0,84.8 416.0,84.8 417.0,84.8 418.0,84.8 419.0,84.9 420.0,84.9 421.0,84.9 422.0,84.9 423.0,84.9 424.0,84.9 425.0,84.9 426.0,84.9 427.0,84.9 428.0,84.9 429.0,84.9 430.0,84.9 431.0,84.9 432.0,84.9 433.0,84.9 434.0,84.9 435.0,84.9 436.0,84.9 437.0,84.9 438.0,84.9 439.0,84.9 440.0,84.9 441.0,84.9 442.0,85.0 443.0,85.0 444.0,85.0 445.0,85.0 446.0,85.0 447.0,85.0 448.0,85.0 449.0,85.0 450.0,85.0 451.0,85.0 452.0,85.0 453.0,85.0 454.0,85.0 455.0,85.0 456.0,85.0 457.0,85.0 458.0,85.0 459.0,85.0 460.0,85.0 461.0,85.0 462.0,85.0 463.0,85.0 464.0,85.0 465.0,85.1 466.0,85.1 467.0,85.1 468.0,85.1 469.0,85.1 470.0,85.1 471.0,85.1 472.0,85.1 473.0,85.1 474.0,85.1 475.0,85.1 476.0,85.1 477.0,85.1 478.0,85.1 479.0,85.1 480.0,85.1 481.0,85.1 482.0,85.1 483.0,85.1 484.0,85.1 485.0,85.1 486.0,85.1 487.0,85.2 488.0,85.2 489.0,85.2 490.0,85.2 491.0,85.2 492.0,85.2 493.0,85.2 494.0,85.2 495.0,85.2 496.0,85.2 497.0,85.2 498.0,85.2 499.0,85.2 500.0,85.2 501.0,85.2 502.0,85.2 503.0,85.2 504.0,85.2 505.0,85.2 506.0,85.2 507.0,85.2 508.0,85.2 509.0,85.2 510.0,85.3 511.0,85.3 512.0,85.3 513.0,85.3 514.0,85.3 515.0,85.3 516.0,85.3 517.0,85.3 518.0,85.3 519.0,85.3 520.0,85.3 521.0,85.3 522.0,86.8 523.0,88.2 524.0,88.2 525.0,88.2 526.0,88.2 527.0,88.2 528.0,88.2 529.0,88.2 530.0,88.2 531.0,88.2 532.0,88.2 533.0,88.2 534.0,88.2 535.0,88.2 536.0,88.2 537.0,88.2 538.0,88.2 539.0,88.2 540.0,88.2 541.0,88.2 542.0,88.2 543.0,88.2 544.0,88.2 545.0,88.2 546.0,88.2 547.0,88.2 548.0,88.2 549.0,88.2 550.0,88.2 551.0,88.2 552.0,88.2 553.0,88.2 554.0,88.2 555.0,88.2 556.0,88.2 557.0,88.2 558.0,88.2 559.0,88.2 560.0,88.2 561.0,88.2 562.0,88.2 563.0,88.2 564.0,88.2 565.0,88.2 566.0,88.2 567.0,88.2 568.0,88.2 569.0,88.2 570.0,88.2 571.0,88.2 572.0,88.2 573.0,88.2 574.0,88.2 575.0,88.2 576.0,88.2 577.0,88.2 578.0,88.2 579.0,88.2 580.0,88.2 581.0,88.2 582.0,88.2 583.0,88.2 584.0,88.2 585.0,88.2 586.0,88.2 587.0,88.2 588.0,88.2 589.0,88.2 590.0,88.2 591.0,88.2 592.0,88.2 593.0,88.2 594.0,88.2 595.0,88.2 596.0,88.2 597.0,88.2 598.0,88.2 599.0,88.2 600.0,88.2 601.0,88.2 602.0,88.2 603.0,88.2 604.0,88.2 605.0,88.2 606.0,88.2 607.0,88.2 608.0,88.2 609.0,88.2 610.0,88.2 611.0,88.2 612.0,88.2 613.0,88.2 614.0,88.2 615.0,88.2 616.0,88.2 617.0,88.2 618.0,88.2 619.0,88.2 620.0,88.2 621.0,88.2 622.0,88.2 623.0,88.2 624.0,88.2 625.0,88.2 626.0,88.2 627.0,88.2 628.0,88.2 629.0,88.2 630.0,88.2 631.0,88.2 632.0,88.2 633.0,88.2 634.0,88.2 635.0,88.2 636.0,88.2 637.0,88.2 638.0,88.2 639.0,88.2 640.0,88.2 641.0,88.2 642.0,88.2 643.0,88.2 644.0,88.2 645.0,88.2 646.0,88.2 647.0,88.2 648.0,88.2 649.0,88.2 650.0,88.2 651.0,88.2 652.0,88.2 653.0,88.2 654.0,88.2 655.0,88.2 656.0,88.2 657.0,88.2 658.0,88.2 659.0,88.2 660.0,88.2 661.0,88.2 662.0,88.2 663.0,88.2 664.0,88.2 665.0,88.2 666.0,88.2 667.0,88.2 668.0,88.2 669.0,88.2 670.0,88.2 671.0,88.2 672.0,88.2 673.0,88.2 674.0,88.2 675.0,88.2 676.0,88.2 677.0,88.2 678.0,88.2 679.0,88.2 680.0,88.2 681.0,88.2 682.0,88.2 683.0,88.2 684.0,88.2 685.0,88.2 686.0,88.2 687.0,88.2 688.0,88.2 689.0,88.2 690.0,88.2 691.0,88.2 692.0,88.2 693.0,88.2 694.0,88.2 695.0,88.2 696.0,88.2 697.0,88.2 698.0,88.2 699.0,88.2 700.0,88.2 701.0,88.2 702.0,88.2 703.0,88.2 704.0,88.2 705.0,88.2 706.0,88.2 707.0,88.2 708.0,88.2 709.0,88.2 710.0,88.2 711.0,88.2 712.0,88.2 713.0,88.2 714.0,88.2 715.0,88.2 716.0,88.2 717.0,88.2 718.0,88.2 719.0,88.2 720.0,88.2 721.0,88.2 722.0,88.2 723.0,88.2 724.0,88.2 725.0,88.2 726.0,88.2 727.0,88.2 728.0,88.2 729.0,88.2 730.0,88.2 731.0,88.2 732.0,88.2 733.0,88.2 734.0,88.2 735.0,88.2 736.0,88.2 737.0,88.2 738.0,88.2 739.0,88.2 740.0,88.2 741.0,88.2 742.0,88.2 743.0,88.2 744.0,88.2 745.0,88.2 746.0,88.2 747.0,88.2 748.0,88.2 749.0,88.2 750.0,88.2 751.0,88.2 752.0,88.2 753.0,88.2 754.0,88.2 755.0,88.2 756.0,88.2 757.0,88.2 758.0,88.2 759.0,88.2 760.0,88.2 761.0,88.2 762.0,88.2 763.0,88.2 764.0,88.2 765.0,88.2 766.0,88.2 767.0,88.2 768.0,88.2 769.0,88.2 770.0,88.2 771.0,88.2 772.0,88.2 773.0,88.2 774.0,88.2 775.0,88.2 776.0,88.2 777.0,88.2 778.0,88.2 779.0,88.2 780.0,88.2 781.0,88.2 782.0,88.2 783.0,88.2 784.0,88.2 785.0,88.2 786.0,88.2 787.0,88.2 788.0,88.2 789.0,88.2 790.0,88.2 791.0,88.2 792.0,88.2 793.0,88.2 794.0,88.2 795.0,88.2 796.0,88.2 797.0,88.2 798.0,88.2 799.0,88.2 800.0,88.2 801.0,88.2 802.0,88.2 803.0,88.2 804.0,88.2 805.0,88.2 806.0,88.2 807.0,88.2 808.0,88.2 809.0,88.2 810.0,88.2 811.0,88.2 812.0,88.2 813.0,88.2 814.0,88.2 815.0,88.2 816.0,88.2 817.0,88.2 818.0,88.2 819.0,88.2 820.0,88.2 821.0,88.2 822.0,88.2 823.0,88.2 824.0,88.2 825.0,88.2 826.0,88.2 827.0,88.2 828.0,88.2 829.0,88.2 830.0,88.2 831.0,88.2 832.0,88.2 833.0,88.2 834.0,88.2 835.0,88.2 836.0,88.2 837.0,88.2 838.0,88.2 839.0,88.2 840.0,88.2 841.0,88.2 842.0,88.2 843.0,88.2 844.0,88.2 844.0,96.2 843.0,96.2 842.0,96.2 841.0,96.2 840.0,96.2 839.0,96.2 838.0,96.2 837.0,96.2 836.0,96.2 835.0,96.2 834.0,96.2 833.0,96.2 832.0,96.2 831.0,96.2 830.0,96.2 829.0,96.2 828.0,96.2 827.0,96.2 826.0,96.2 825.0,96.2 824.0,96.2 823.0,96.2 822.0,96.2 821.0,96.2 820.0,96.2 819.0,96.2 818.0,96.2 817.0,96.2 816.0,96.2 815.0,96.2 814.0,96.2 813.0,96.2 812.0,96.2 811.0,96.2 810.0,96.2 809.0,96.2 808.0,96.2 807.0,96.2 806.0,96.2 805.0,96.2 804.0,96.2 803.0,96.2 802.0,96.2 801.0,96.2 800.0,96.2 799.0,96.2 798.0,96.2 797.0,96.2 796.0,96.2 795.0,96.2 794.0,96.2 793.0,96.2 792.0,96.2 791.0,96.2 790.0,96.2 789.0,96.2 788.0,96.2 787.0,96.2 786.0,96.2 785.0,96.2 784.0,96.2 783.0,96.2 782.0,96.2 781.0,96.2 780.0,96.2 779.0,96.2 778.0,96.2 777.0,96.2 776.0,96.2 775.0,96.2 774.0,96.2 773.0,96.2 772.0,96.2 771.0,96.2 770.0,96.2 769.0,96.2 768.0,96.2 767.0,96.2 766.0,96.2 765.0,96.2 764.0,96.2 763.0,96.2 762.0,96.2 761.0,96.2 760.0,96.2 759.0,96.2 758.0,96.2 757.0,96.2 756.0,96.2 755.0,96.2 754.0,96.2 753.0,96.2 752.0,96.2 751.0,96.2 750.0,96.2 749.0,96.2 748.0,96.2 747.0,96.2 746.0,96.2 745.0,96.2 744.0,96.2 743.0,96.2 742.0,96.2 741.0,96.2 740.0,96.2 739.0,96.2 738.0,96.2 737.0,96.2 736.0,96.2 735.0,96.2 734.0,96.2 733.0,96.2 732.0,96.2 731.0,96.2 730.0,96.2 729.0,96.2 728.0,96.2 727.0,96.2 726.0,96.2 725.0,96.2 724.0,96.2 723.0,96.2 722.0,96.2 721.0,96.2 720.0,96.2 719.0,96.2 718.0,96.2 717.0,96.2 716.0,96.2 715.0,96.2 714.0,96.2 713.0,96.2 712.0,96.2 711.0,96.2 710.0,96.2 709.0,96.2 708.0,96.2 707.0,96.2 706.0,96.2 705.0,96.2 704.0,96.2 703.0,96.2 702.0,96.2 701.0,96.2 700.0,96.2 699.0,96.2 698.0,96.2 697.0,96.2 696.0,96.2 695.0,96.2 694.0,96.2 693.0,96.2 692.0,96.2 691.0,96.2 690.0,96.2 689.0,96.2 688.0,96.2 687.0,96.2 686.0,96.2 685.0,96.2 684.0,96.2 683.0,96.2 682.0,96.2 681.0,96.2 680.0,96.2 679.0,96.2 678.0,96.2 677.0,96.2 676.0,96.2 675.0,96.2 674.0,96.2 673.0,96.2 672.0,96.2 671.0,96.2 670.0,96.2 669.0,96.2 668.0,96.2 667.0,96.2 666.0,96.2 665.0,96.2 664.0,96.2 663.0,96.2 662.0,96.2 661.0,96.2 660.0,96.2 659.0,96.2 658.0,96.2 657.0,96.2 656.0,96.2 655.0,96.2 654.0,96.2 653.0,96.2 652.0,96.2 651.0,96.2 650.0,96.2 649.0,96.2 648.0,96.2 647.0,96.2 646.0,96.2 645.0,96.2 644.0,96.2 643.0,96.2 642.0,96.2 641.0,96.2 640.0,96.2 639.0,96.2 638.0,96.2 637.0,96.2 636.0,96.2 635.0,96.2 634.0,96.2 633.0,96.2 632.0,96.2 631.0,96.2 630.0,96.2 629.0,96.2 628.0,96.2 627.0,96.2 626.0,96.2 625.0,96.2 624.0,96.2 623.0,96.2 622.0,96.2 621.0,96.2 620.0,96.2 619.0,96.2 618.0,96.2 617.0,96.2 616.0,96.2 615.0,96.2 614.0,96.2 613.0,96.2 612.0,96.2 611.0,96.2 610.0,96.2 609.0,96.2 608.0,96.2 607.0,96.2 606.0,96.2 605.0,96.2 604.0,96.2 603.0,96.2 602.0,96.2 601.0,96.2 600.0,96.2 599.0,96.2 598.0,96.2 597.0,96.2 596.0,96.2 595.0,96.2 594.0,96.2 593.0,96.2 592.0,96.2 591.0,96.2 590.0,96.2 589.0,96.2 588.0,96.2 587.0,96.2 586.0,96.2 585.0,96.2 584.0,96.2 583.0,96.2 582.0,96.2 581.0,96.2 580.0,96.2 579.0,96.2 578.0,96.2 577.0,96.2 576.0,96.2 575.0,96.2 574.0,96.2 573.0,96.2 572.0,96.2 571.0,96.2 570.0,96.2 569.0,96.2 568.0,96.2 567.0,96.2 566.0,96.2 565.0,96.2 564.0,96.2 563.0,96.2 562.0,96.2 561.0,96.2 560.0,96.2 559.0,96.2 558.0,96.2 557.0,96.2 556.0,96.2 555.0,96.2 554.0,96.2 553.0,96.2 552.0,96.2 551.0,96.2 550.0,96.2 549.0,96.2 548.0,96.2 547.0,96.2 546.0,96.2 545.0,96.2 544.0,96.2 543.0,96.2 542.0,96.2 541.0,96.2 540.0,96.2 539.0,96.2 538.0,96.2 537.0,96.2 536.0,96.2 535.0,96.2 534.0,96.2 533.0,96.2 532.0,96.2 531.0,96.2 530.0,96.2 529.0,96.2 528.0,96.2 527.0,96.2 526.0,96.2 525.0,96.2 524.0,96.2 523.0,96.2 522.0,96.1 521.0,96.1 520.0,96.1 519.0,96.1 518.0,96.1 517.0,96.1 516.0,96.1 515.0,96.1 514.0,96.1 513.0,96.1 512.0,96.1 511.0,96.1 510.0,96.1 509.0,96.0 508.0,96.0 507.0,96.0 506.0,96.0 505.0,96.0 504.0,96.0 503.0,96.0 502.0,96.0 501.0,96.0 500.0,96.0 499.0,96.0 498.0,96.0 497.0,96.0 496.0,96.0 495.0,96.0 494.0,96.0 493.0,96.0 492.0,96.0 491.0,96.0 490.0,96.0 489.0,96.0 488.0,96.0 487.0,96.0 486.0,95.9 485.0,95.9 484.0,95.9 483.0,95.9 482.0,95.9 481.0,95.9 480.0,95.9 479.0,95.9 478.0,95.9 477.0,95.9 476.0,95.9 475.0,95.9 474.0,95.9 473.0,95.9 472.0,95.9 471.0,95.9 470.0,95.9 469.0,95.9 468.0,95.9 467.0,95.9 466.0,95.9 465.0,95.9 464.0,95.8 463.0,95.8 462.0,95.8 461.0,95.8 460.0,95.8 459.0,95.8 458.0,95.8 457.0,95.8 456.0,95.8 455.0,95.8 454.0,95.8 453.0,95.8 452.0,95.8 451.0,95.8 450.0,95.8 449.0,95.8 448.0,95.8 447.0,95.8 446.0,95.8 445.0,95.8 444.0,95.8 443.0,95.8 442.0,95.8 441.0,95.7 440.0,95.7 439.0,95.7 438.0,95.7 437.0,95.7 436.0,95.7 435.0,95.7 434.0,95.7 433.0,95.7 432.0,95.7 431.0,95.7 430.0,95.7 429.0,95.7 428.0,95.7 427.0,95.7 426.0,95.7 425.0,95.7 424.0,95.7 423.0,95.7 422.0,95.7 421.0,95.7 420.0,95.7 419.0,95.7 418.0,95.6 417.0,95.6 416.0,95.6 415.0,95.6 414.0,95.6 413.0,95.6 412.0,95.6 411.0,95.6 410.0,95.6 409.0,95.6 408.0,95.6 407.0,95.6 406.0,95.2 405.0,94.7 404.0,94.3 403.0,93.9 402.0,93.5 401.0,93.0 400.0,92.6 399.0,92.6 398.0,92.6 397.0,92.6 396.0,92.5 395.0,92.5 394.0,92.5 393.0,92.5 392.0,92.5 391.0,92.5 390.0,92.5 389.0,92.5 388.0,92.4 387.0,92.4 386.0,92.4 385.0,92.4 384.0,92.4 383.0,92.4 382.0,92.4 381.0,92.3 380.0,92.3 379.0,92.3 378.0,92.3 377.0,92.3 376.0,92.3 375.0,92.3 374.0,92.3 373.0,92.2 372.0,92.2 371.0,92.2 370.0,92.2 369.0,92.2 368.0,92.2 367.0,92.2 366.0,92.1 365.0,92.1 364.0,92.1 363.0,92.1 362.0,92.1 361.0,92.1 360.0,92.1 359.0,92.1 358.0,92.0 357.0,92.0 356.0,92.0 355.0,92.0 354.0,92.0 353.0,92.0 352.0,92.0 351.0,91.9 350.0,91.9 349.0,91.9 348.0,91.9 347.0,91.9 346.0,91.9 345.0,91.9 344.0,91.9 343.0,91.8 342.0,91.8 341.0,91.8 340.0,91.8 339.0,91.8 338.0,91.7 337.0,91.7 336.0,91.7 335.0,91.6 334.0,91.6 333.0,91.5 332.0,91.5 331.0,91.5 330.0,91.4 329.0,91.4 328.0,91.3 327.0,91.3 326.0,91.3 325.0,91.2 324.0,91.2 323.0,91.2 322.0,91.1 321.0,91.1 320.0,91.0 319.0,91.0 318.0,91.0 317.0,90.9 316.0,90.9 315.0,90.9 314.0,90.8 313.0,90.8 312.0,90.7 311.0,90.7 310.0,90.7 309.0,90.6 308.0,90.6 307.0,90.6 306.0,90.5 305.0,90.5 304.0,90.5 303.0,90.4 302.0,90.4 301.0,90.3 300.0,90.3 299.0,90.3 298.0,90.2 297.0,90.2 296.0,90.2 295.0,90.1 294.0,90.1 293.0,90.1 292.0,90.1 291.0,90.0 290.0,90.0 289.0,89.9 288.0,89.9 287.0,89.8 286.0,89.8 285.0,89.7 284.0,89.7 283.0,89.6 282.0,89.6 281.0,89.5 280.0,89.5 279.0,89.4 278.0,89.4 277.0,89.3 276.0,89.3 275.0,89.2 274.0,89.2 273.0,89.1 272.0,89.1" fill="#b00c0c"/>
<polyline points="243.0,208.6 250.0,207.6 266.0,203.4 270.0,199.0 286.0,182.0 359.5,130.0 375.0,118.0 399.0,99.5 405.0,93.0 408.5,90.8 412.0,90.6 413.0,90.7 414.0,90.8 415.0,90.8 416.0,90.9 417.0,91.0 418.0,91.1 419.0,91.2 420.0,91.2 421.0,91.1 422.0,92.7 423.0,91.3 424.0,91.6 425.0,91.6 426.0,91.7 427.0,91.6 428.0,93.2 429.0,91.8 430.0,92.0 431.0,92.0 432.0,92.0 433.0,92.0 434.0,92.0 435.0,92.0 436.0,92.0 437.0,92.0 438.0,92.0 439.0,92.0 440.0,92.0 441.0,92.0 442.0,92.0 443.0,92.0 444.0,92.0 445.0,92.0 446.0,92.0 447.0,92.0 448.0,92.0 449.0,92.0 450.0,92.0 451.0,92.0 452.0,92.0 453.0,92.0 454.0,92.0 455.0,92.0 456.0,92.0 457.0,92.0 458.0,92.0 459.0,92.0 460.0,92.0 461.0,91.8 462.0,93.3 463.0,91.8 464.0,92.0 465.0,92.0 466.0,92.0 467.0,92.0 468.0,92.0 469.0,92.0 470.0,92.0 471.0,92.0 472.0,92.0 473.0,92.0 474.0,92.0 475.0,91.8 476.0,93.3 477.0,91.8 478.0,92.0 479.0,92.0 480.0,92.0 481.0,92.0 482.0,92.0 483.0,92.0 484.0,92.0 485.0,92.0 486.0,92.0 487.0,92.0 488.0,92.0 489.0,92.0 490.0,92.0 491.0,92.0 492.0,92.0 493.0,91.8 494.0,93.3 495.0,91.8 496.0,92.0 497.0,92.0 498.0,92.0 499.0,92.0 500.0,92.0 501.0,92.0 502.0,92.0 503.0,92.0 504.0,92.0 505.0,92.0 506.0,92.0 507.0,92.0 508.0,92.0 509.0,92.0 510.0,92.0 511.0,92.0 512.0,92.0 513.0,92.0 514.0,92.0 515.0,92.0 516.0,92.0 517.0,92.0 518.0,92.0 519.0,92.0 520.0,92.0 521.0,90.6 522.0,89.2 523.0,89.2 524.0,89.2 525.0,89.2 526.0,89.2 527.0,89.2 528.0,89.9 529.0,88.8 530.0,89.9 531.0,89.2 532.0,89.2 533.0,89.2 534.0,89.2 535.0,89.2 536.0,89.2 537.0,89.2 538.0,89.2 539.0,89.2 540.0,89.2 541.0,89.2 542.0,89.2 543.0,89.2 544.0,89.2 545.0,89.2 546.0,89.2 547.0,89.2 548.0,89.2 549.0,89.2 550.0,89.2 551.0,89.2 552.0,89.2 553.0,89.2 554.0,89.2 555.0,89.2 556.0,89.2 557.0,89.2 558.0,89.2 559.0,89.2 560.0,89.2 561.0,89.2 562.0,89.2 563.0,89.2 564.0,89.2 565.0,89.2 566.0,89.2 567.0,89.2 568.0,89.2 569.0,89.2 570.0,89.2 571.0,89.2 572.0,89.9 573.0,88.8 574.0,89.9 575.0,89.0 576.0,90.5 577.0,89.0 578.0,89.2 579.0,89.2 580.0,89.2 581.0,89.2 582.0,89.2 583.0,89.2 584.0,89.2 585.0,89.2 586.0,89.2 587.0,89.2 588.0,89.2 589.0,89.2 590.0,89.9 591.0,88.8 592.0,89.9 593.0,88.8 594.0,89.9 595.0,89.2 596.0,89.2 597.0,89.2 598.0,89.2 599.0,89.2 600.0,89.9 601.0,88.8 602.0,89.9 603.0,89.2 604.0,89.2 605.0,89.2 606.0,89.2 607.0,89.2 608.0,89.2 609.0,89.2 610.0,89.2 611.0,89.2 612.0,89.2 613.0,89.2 614.0,89.2 615.0,89.2 616.0,89.2 617.0,89.2 618.0,89.2 619.0,89.2 620.0,89.9 621.0,88.8 622.0,89.9 623.0,89.2 624.0,89.2 625.0,89.2 626.0,89.2 627.0,89.2 628.0,89.2 629.0,89.0 630.0,90.5 631.0,89.0 632.0,89.2 633.0,89.0 634.0,90.5 635.0,89.0 636.0,89.2 637.0,89.0 638.0,90.5 639.0,89.0 640.0,89.2 641.0,89.2 642.0,89.2 643.0,89.2 644.0,89.2 645.0,89.2 646.0,89.2 647.0,89.2 648.0,89.2 649.0,89.2 650.0,89.2 651.0,89.2 652.0,89.2 653.0,89.0 654.0,90.5 655.0,89.0 656.0,89.2 657.0,89.0 658.0,90.5 659.0,89.0 660.0,89.2 661.0,89.2 662.0,89.9 663.0,88.8 664.0,89.9 665.0,89.2 666.0,89.2 667.0,89.2 668.0,89.2 669.0,89.0 670.0,90.5 671.0,89.0 672.0,89.2 673.0,89.2 674.0,89.2 675.0,89.2 676.0,89.2 677.0,89.2 678.0,89.2 679.0,89.2 680.0,89.2 681.0,89.2 682.0,89.2 683.0,89.2 684.0,89.2 685.0,89.2 686.0,89.2 687.0,89.2 688.0,89.2 689.0,89.2 690.0,89.2 691.0,89.2 692.0,89.2 693.0,89.2 694.0,89.2 695.0,89.2 696.0,89.2 697.0,89.2 698.0,89.9 699.0,88.8 700.0,89.9 701.0,89.2 702.0,89.2 703.0,89.2 704.0,89.2 705.0,89.2 706.0,89.2 707.0,89.2 708.0,89.2 709.0,89.2 710.0,89.2 711.0,89.2 712.0,89.2 713.0,89.2 714.0,89.2 715.0,89.2 716.0,89.2 717.0,89.2 718.0,89.2 719.0,89.2 720.0,89.2 721.0,89.2 722.0,89.2 723.0,89.0 724.0,90.5 725.0,89.0 726.0,89.2 727.0,89.2 728.0,89.9 729.0,88.8 730.0,89.9 731.0,89.2 732.0,89.2 733.0,89.2 734.0,89.2 735.0,89.2 736.0,89.9 737.0,88.8 738.0,89.9 739.0,89.2 740.0,89.2 741.0,89.2 742.0,89.2 743.0,89.2 744.0,89.2 745.0,89.2 746.0,89.2 747.0,89.2 748.0,89.2 749.0,89.2 750.0,89.2 751.0,89.2 752.0,89.2 753.0,89.2 754.0,89.2 755.0,89.2 756.0,89.2 757.0,89.2 758.0,89.9 759.0,88.8 760.0,89.9 761.0,89.2 762.0,89.2 763.0,89.2 764.0,89.2 765.0,89.2 766.0,89.2 767.0,89.2 768.0,89.2 769.0,89.2 770.0,89.2 771.0,89.2 772.0,89.2 773.0,89.2 774.0,89.2 775.0,89.2 776.0,89.2 777.0,89.2 778.0,89.2 779.0,89.2 780.0,89.2 781.0,89.2 782.0,89.2 783.0,89.2 784.0,89.2 785.0,89.2 786.0,89.2 787.0,89.2 788.0,89.2 789.0,89.2 790.0,89.2 791.0,89.2 792.0,89.2 793.0,89.2 794.0,89.2 795.0,89.2 796.0,89.2 797.0,89.2 798.0,89.2 799.0,89.2 800.0,89.2 801.0,89.2 802.0,89.2 803.0,89.2 804.0,89.2 805.0,89.2 806.0,89.2 807.0,89.2 808.0,89.2 809.0,89.2 810.0,89.2 811.0,89.2 812.0,89.2 813.0,89.2 814.0,89.2 815.0,89.2 816.0,89.2 817.0,89.2 818.0,89.2 819.0,89.2 820.0,89.2 821.0,89.2 822.0,89.2 823.0,89.2 824.0,89.9 825.0,88.8 826.0,89.9 827.0,89.2 828.0,89.2 829.0,89.2 830.0,89.2 831.0,89.2 832.0,89.2 833.0,89.2 834.0,89.9 835.0,88.8 836.0,89.9 837.0,89.2 838.0,89.2 839.0,89.2 840.0,89.2 841.0,89.2 842.0,89.2 843.0,89.2 844.0,89.2" fill="none" stroke="#0a8a20" stroke-width="3" />
<polyline points="243.0,208.6 250.0,207.6 266.0,203.4 270.0,199.0 286.0,182.0 359.5,130.0 375.0,118.0 399.0,99.5 405.0,93.0 408.5,90.8 412.0,90.6 413.0,90.7 414.0,90.8 415.0,90.8 416.0,90.9 417.0,91.0 418.0,91.1 419.0,91.2 420.0,91.2 421.0,91.1 422.0,92.7 423.0,91.3 424.0,91.6 425.0,91.6 426.0,91.7 427.0,91.6 428.0,93.2 429.0,91.8 430.0,92.0 431.0,92.0 432.0,92.0 433.0,92.0 434.0,92.0 435.0,92.0 436.0,92.0 437.0,92.0 438.0,92.0 439.0,92.0 440.0,92.0 441.0,92.0 442.0,92.0 443.0,92.0 444.0,92.0 445.0,92.0 446.0,92.0 447.0,92.0 448.0,92.0 449.0,92.0 450.0,92.0 451.0,92.0 452.0,92.0 453.0,92.0 454.0,92.0 455.0,92.0 456.0,92.0 457.0,92.0 458.0,92.0 459.0,92.0 460.0,92.0 461.0,91.8 462.0,93.3 463.0,91.8 464.0,92.0 465.0,92.0 466.0,92.0 467.0,92.0 468.0,92.0 469.0,92.0 470.0,92.0 471.0,92.0 472.0,92.0 473.0,92.0 474.0,92.0 475.0,91.8 476.0,93.3 477.0,91.8 478.0,92.0 479.0,92.0 480.0,92.0 481.0,92.0 482.0,92.0 483.0,92.0 484.0,92.0 485.0,92.0 486.0,92.0 487.0,92.0 488.0,92.0 489.0,92.0 490.0,92.0 491.0,92.0 492.0,92.0 493.0,91.8 494.0,93.3 495.0,91.8 496.0,92.0 497.0,92.0 498.0,92.0 499.0,92.0 500.0,92.0 501.0,92.0 502.0,92.0 503.0,92.0 504.0,92.0 505.0,92.0 506.0,92.0 507.0,92.0 508.0,92.0 509.0,92.0 510.0,92.0 511.0,92.0 512.0,92.0 513.0,92.0 514.0,92.0 515.0,92.0 516.0,92.0 517.0,92.0 518.0,92.0 519.0,92.0 520.0,92.0 521.0,90.6 522.0,89.2 523.0,89.2 524.0,89.2 525.0,89.2 526.0,89.2 527.0,89.2 528.0,89.9 529.0,88.8 530.0,89.9 531.0,89.2 532.0,89.2 533.0,89.2 534.0,89.2 535.0,89.2 536.0,89.2 537.0,89.2 538.0,89.2 539.0,89.2 540.0,89.2 541.0,89.2 542.0,89.2 543.0,89.2 544.0,89.2 545.0,89.2 546.0,89.2 547.0,89.2 548.0,89.2 549.0,89.2 550.0,89.2 551.0,89.2 552.0,89.2 553.0,89.2 554.0,89.2 555.0,89.2 556.0,89.2 557.0,89.2 558.0,89.2 559.0,89.2 560.0,89.2 561.0,89.2 562.0,89.2 563.0,89.2 564.0,89.2 565.0,89.2 566.0,89.2 567.0,89.2 568.0,89.2 569.0,89.2 570.0,89.2 571.0,89.2 572.0,89.9 573.0,88.8 574.0,89.9 575.0,89.0 576.0,90.5 577.0,89.0 578.0,89.2 579.0,89.2 580.0,89.2 581.0,89.2 582.0,89.2 583.0,89.2 584.0,89.2 585.0,89.2 586.0,89.2 587.0,89.2 588.0,89.2 589.0,89.2 590.0,89.9 591.0,88.8 592.0,89.9 593.0,88.8 594.0,89.9 595.0,89.2 596.0,89.2 597.0,89.2 598.0,89.2 599.0,89.2 600.0,89.9 601.0,88.8 602.0,89.9 603.0,89.2 604.0,89.2 605.0,89.2 606.0,89.2 607.0,89.2 608.0,89.2 609.0,89.2 610.0,89.2 611.0,89.2 612.0,89.2 613.0,89.2 614.0,89.2 615.0,89.2 616.0,89.2 617.0,89.2 618.0,89.2 619.0,89.2 620.0,89.9 621.0,88.8 622.0,89.9 623.0,89.2 624.0,89.2 625.0,89.2 626.0,89.2 627.0,89.2 628.0,89.2 629.0,89.0 630.0,90.5 631.0,89.0 632.0,89.2 633.0,89.0 634.0,90.5 635.0,89.0 636.0,89.2 637.0,89.0 638.0,90.5 639.0,89.0 640.0,89.2 641.0,89.2 642.0,89.2 643.0,89.2 644.0,89.2 645.0,89.2 646.0,89.2 647.0,89.2 648.0,89.2 649.0,89.2 650.0,89.2 651.0,89.2 652.0,89.2 653.0,89.0 654.0,90.5 655.0,89.0 656.0,89.2 657.0,89.0 658.0,90.5 659.0,89.0 660.0,89.2 661.0,89.2 662.0,89.9 663.0,88.8 664.0,89.9 665.0,89.2 666.0,89.2 667.0,89.2 668.0,89.2 669.0,89.0 670.0,90.5 671.0,89.0 672.0,89.2 673.0,89.2 674.0,89.2 675.0,89.2 676.0,89.2 677.0,89.2 678.0,89.2 679.0,89.2 680.0,89.2 681.0,89.2 682.0,89.2 683.0,89.2 684.0,89.2 685.0,89.2 686.0,89.2 687.0,89.2 688.0,89.2 689.0,89.2 690.0,89.2 691.0,89.2 692.0,89.2 693.0,89.2 694.0,89.2 695.0,89.2 696.0,89.2 697.0,89.2 698.0,89.9 699.0,88.8 700.0,89.9 701.0,89.2 702.0,89.2 703.0,89.2 704.0,89.2 705.0,89.2 706.0,89.2 707.0,89.2 708.0,89.2 709.0,89.2 710.0,89.2 711.0,89.2 712.0,89.2 713.0,89.2 714.0,89.2 715.0,89.2 716.0,89.2 717.0,89.2 718.0,89.2 719.0,89.2 720.0,89.2 721.0,89.2 722.0,89.2 723.0,89.0 724.0,90.5 725.0,89.0 726.0,89.2 727.0,89.2 728.0,89.9 729.0,88.8 730.0,89.9 731.0,89.2 732.0,89.2 733.0,89.2 734.0,89.2 735.0,89.2 736.0,89.9 737.0,88.8 738.0,89.9 739.0,89.2 740.0,89.2 741.0,89.2 742.0,89.2 743.0,89.2 744.0,89.2 745.0,89.2 746.0,89.2 747.0,89.2 748.0,89.2 749.0,89.2 750.0,89.2 751.0,89.2 752.0,89.2 753.0,89.2 754.0,89.2 755.0,89.2 756.0,89.2 757.0,89.2 758.0,89.9 759.0,88.8 760.0,89.9 761.0,89.2 762.0,89.2 763.0,89.2 764.0,89.2 765.0,89.2 766.0,89.2 767.0,89.2 768.0,89.2 769.0,89.2 770.0,89.2 771.0,89.2 772.0,89.2 773.0,89.2 774.0,89.2 775.0,89.2 776.0,89.2 777.0,89.2 778.0,89.2 779.0,89.2 780.0,89.2 781.0,89.2 782.0,89.2 783.0,89.2 784.0,89.2 785.0,89.2 786.0,89.2 787.0,89.2 788.0,89.2 789.0,89.2 790.0,89.2 791.0,89.2 792.0,89.2 793.0,89.2 794.0,89.2 795.0,89.2 796.0,89.2 797.0,89.2 798.0,89.2 799.0,89.2 800.0,89.2 801.0,89.2 802.0,89.2 803.0,89.2 804.0,89.2 805.0,89.2 806.0,89.2 807.0,89.2 808.0,89.2 809.0,89.2 810.0,89.2 811.0,89.2 812.0,89.2 813.0,89.2 814.0,89.2 815.0,89.2 816.0,89.2 817.0,89.2 818.0,89.2 819.0,89.2 820.0,89.2 821.0,89.2 822.0,89.2 823.0,89.2 824.0,89.9 825.0,88.8 826.0,89.9 827.0,89.2 828.0,89.2 829.0,89.2 830.0,89.2 831.0,89.2 832.0,89.2 833.0,89.2 834.0,89.9 835.0,88.8 836.0,89.9 837.0,89.2 838.0,89.2 839.0,89.2 840.0,89.2 841.0,89.2 842.0,89.2 843.0,89.2 844.0,89.2" fill="none" stroke="#38e870" stroke-width="2" />
<polyline points="243.0,208.6 250.0,207.6 266.0,203.4 270.0,199.0 286.0,182.0 359.5,130.0 375.0,118.0 399.0,99.5 405.0,93.0 408.5,90.8 412.0,90.6 413.0,90.7 414.0,90.8 415.0,90.8 416.0,90.9 417.0,91.0 418.0,91.1 419.0,91.2 420.0,91.2 421.0,91.1 422.0,92.7 423.0,91.3 424.0,91.6 425.0,91.6 426.0,91.7 427.0,91.6 428.0,93.2 429.0,91.8 430.0,92.0 431.0,92.0 432.0,92.0 433.0,92.0 434.0,92.0 435.0,92.0 436.0,92.0 437.0,92.0 438.0,92.0 439.0,92.0 440.0,92.0 441.0,92.0 442.0,92.0 443.0,92.0 444.0,92.0 445.0,92.0 446.0,92.0 447.0,92.0 448.0,92.0 449.0,92.0 450.0,92.0 451.0,92.0 452.0,92.0 453.0,92.0 454.0,92.0 455.0,92.0 456.0,92.0 457.0,92.0 458.0,92.0 459.0,92.0 460.0,92.0 461.0,91.8 462.0,93.3 463.0,91.8 464.0,92.0 465.0,92.0 466.0,92.0 467.0,92.0 468.0,92.0 469.0,92.0 470.0,92.0 471.0,92.0 472.0,92.0 473.0,92.0 474.0,92.0 475.0,91.8 476.0,93.3 477.0,91.8 478.0,92.0 479.0,92.0 480.0,92.0 481.0,92.0 482.0,92.0 483.0,92.0 484.0,92.0 485.0,92.0 486.0,92.0 487.0,92.0 488.0,92.0 489.0,92.0 490.0,92.0 491.0,92.0 492.0,92.0 493.0,91.8 494.0,93.3 495.0,91.8 496.0,92.0 497.0,92.0 498.0,92.0 499.0,92.0 500.0,92.0 501.0,92.0 502.0,92.0 503.0,92.0 504.0,92.0 505.0,92.0 506.0,92.0 507.0,92.0 508.0,92.0 509.0,92.0 510.0,92.0 511.0,92.0 512.0,92.0 513.0,92.0 514.0,92.0 515.0,92.0 516.0,92.0 517.0,92.0 518.0,92.0 519.0,92.0 520.0,92.0 521.0,90.6 522.0,89.2 523.0,89.2 524.0,89.2 525.0,89.2 526.0,89.2 527.0,89.2 528.0,89.9 529.0,88.8 530.0,89.9 531.0,89.2 532.0,89.2 533.0,89.2 534.0,89.2 535.0,89.2 536.0,89.2 537.0,89.2 538.0,89.2 539.0,89.2 540.0,89.2 541.0,89.2 542.0,89.2 543.0,89.2 544.0,89.2 545.0,89.2 546.0,89.2 547.0,89.2 548.0,89.2 549.0,89.2 550.0,89.2 551.0,89.2 552.0,89.2 553.0,89.2 554.0,89.2 555.0,89.2 556.0,89.2 557.0,89.2 558.0,89.2 559.0,89.2 560.0,89.2 561.0,89.2 562.0,89.2 563.0,89.2 564.0,89.2 565.0,89.2 566.0,89.2 567.0,89.2 568.0,89.2 569.0,89.2 570.0,89.2 571.0,89.2 572.0,89.9 573.0,88.8 574.0,89.9 575.0,89.0 576.0,90.5 577.0,89.0 578.0,89.2 579.0,89.2 580.0,89.2 581.0,89.2 582.0,89.2 583.0,89.2 584.0,89.2 585.0,89.2 586.0,89.2 587.0,89.2 588.0,89.2 589.0,89.2 590.0,89.9 591.0,88.8 592.0,89.9 593.0,88.8 594.0,89.9 595.0,89.2 596.0,89.2 597.0,89.2 598.0,89.2 599.0,89.2 600.0,89.9 601.0,88.8 602.0,89.9 603.0,89.2 604.0,89.2 605.0,89.2 606.0,89.2 607.0,89.2 608.0,89.2 609.0,89.2 610.0,89.2 611.0,89.2 612.0,89.2 613.0,89.2 614.0,89.2 615.0,89.2 616.0,89.2 617.0,89.2 618.0,89.2 619.0,89.2 620.0,89.9 621.0,88.8 622.0,89.9 623.0,89.2 624.0,89.2 625.0,89.2 626.0,89.2 627.0,89.2 628.0,89.2 629.0,89.0 630.0,90.5 631.0,89.0 632.0,89.2 633.0,89.0 634.0,90.5 635.0,89.0 636.0,89.2 637.0,89.0 638.0,90.5 639.0,89.0 640.0,89.2 641.0,89.2 642.0,89.2 643.0,89.2 644.0,89.2 645.0,89.2 646.0,89.2 647.0,89.2 648.0,89.2 649.0,89.2 650.0,89.2 651.0,89.2 652.0,89.2 653.0,89.0 654.0,90.5 655.0,89.0 656.0,89.2 657.0,89.0 658.0,90.5 659.0,89.0 660.0,89.2 661.0,89.2 662.0,89.9 663.0,88.8 664.0,89.9 665.0,89.2 666.0,89.2 667.0,89.2 668.0,89.2 669.0,89.0 670.0,90.5 671.0,89.0 672.0,89.2 673.0,89.2 674.0,89.2 675.0,89.2 676.0,89.2 677.0,89.2 678.0,89.2 679.0,89.2 680.0,89.2 681.0,89.2 682.0,89.2 683.0,89.2 684.0,89.2 685.0,89.2 686.0,89.2 687.0,89.2 688.0,89.2 689.0,89.2 690.0,89.2 691.0,89.2 692.0,89.2 693.0,89.2 694.0,89.2 695.0,89.2 696.0,89.2 697.0,89.2 698.0,89.9 699.0,88.8 700.0,89.9 701.0,89.2 702.0,89.2 703.0,89.2 704.0,89.2 705.0,89.2 706.0,89.2 707.0,89.2 708.0,89.2 709.0,89.2 710.0,89.2 711.0,89.2 712.0,89.2 713.0,89.2 714.0,89.2 715.0,89.2 716.0,89.2 717.0,89.2 718.0,89.2 719.0,89.2 720.0,89.2 721.0,89.2 722.0,89.2 723.0,89.0 724.0,90.5 725.0,89.0 726.0,89.2 727.0,89.2 728.0,89.9 729.0,88.8 730.0,89.9 731.0,89.2 732.0,89.2 733.0,89.2 734.0,89.2 735.0,89.2 736.0,89.9 737.0,88.8 738.0,89.9 739.0,89.2 740.0,89.2 741.0,89.2 742.0,89.2 743.0,89.2 744.0,89.2 745.0,89.2 746.0,89.2 747.0,89.2 748.0,89.2 749.0,89.2 750.0,89.2 751.0,89.2 752.0,89.2 753.0,89.2 754.0,89.2 755.0,89.2 756.0,89.2 757.0,89.2 758.0,89.9 759.0,88.8 760.0,89.9 761.0,89.2 762.0,89.2 763.0,89.2 764.0,89.2 765.0,89.2 766.0,89.2 767.0,89.2 768.0,89.2 769.0,89.2 770.0,89.2 771.0,89.2 772.0,89.2 773.0,89.2 774.0,89.2 775.0,89.2 776.0,89.2 777.0,89.2 778.0,89.2 779.0,89.2 780.0,89.2 781.0,89.2 782.0,89.2 783.0,89.2 784.0,89.2 785.0,89.2 786.0,89.2 787.0,89.2 788.0,89.2 789.0,89.2 790.0,89.2 791.0,89.2 792.0,89.2 793.0,89.2 794.0,89.2 795.0,89.2 796.0,89.2 797.0,89.2 798.0,89.2 799.0,89.2 800.0,89.2 801.0,89.2 802.0,89.2 803.0,89.2 804.0,89.2 805.0,89.2 806.0,89.2 807.0,89.2 808.0,89.2 809.0,89.2 810.0,89.2 811.0,89.2 812.0,89.2 813.0,89.2 814.0,89.2 815.0,89.2 816.0,89.2 817.0,89.2 818.0,89.2 819.0,89.2 820.0,89.2 821.0,89.2 822.0,89.2 823.0,89.2 824.0,89.9 825.0,88.8 826.0,89.9 827.0,89.2 828.0,89.2 829.0,89.2 830.0,89.2 831.0,89.2 832.0,89.2 833.0,89.2 834.0,89.9 835.0,88.8 836.0,89.9 837.0,89.2 838.0,89.2 839.0,89.2 840.0,89.2 841.0,89.2 842.0,89.2 843.0,89.2 844.0,89.2" fill="none" stroke="#a0ffc0" stroke-width="0.7" />
<polyline points="96.0,24.6 97.0,24.9 98.0,25.4 99.0,24.8 100.0,25.4 101.0,25.0 102.0,25.1 103.0,24.9 104.0,24.9 105.0,25.2 106.0,25.0 107.0,25.4 108.0,25.0 109.0,25.0 110.0,24.9 111.0,24.9 112.0,25.1 113.0,25.4 114.0,25.5 115.0,25.6 116.0,25.1 117.0,25.1 118.0,25.5 119.0,25.5 120.0,25.4 121.0,25.6 122.0,25.7 123.0,25.2 124.0,24.9 125.0,25.6 126.0,25.0 127.0,25.1 128.0,25.4 129.0,25.5 130.0,25.6 131.0,25.5 132.0,25.8 133.0,25.6 134.0,25.6 135.0,25.6 136.0,25.2 137.0,25.7 138.0,25.3 139.0,25.4 140.0,25.5 141.0,25.4 142.0,25.3 143.0,25.4 144.0,25.4 145.0,25.7 146.0,25.7 147.0,25.9 148.0,25.8 149.0,25.2 150.0,25.7 151.0,25.6 152.0,25.7 153.0,25.2 154.0,25.9 155.0,25.9 156.0,25.2 157.0,25.4 158.0,25.4 159.0,25.5 160.0,25.2 161.0,25.6 162.0,25.5 163.0,25.9 164.0,25.5 165.0,25.1 166.0,25.8 167.0,25.3 168.0,25.2 169.0,25.8 170.0,25.4 171.0,25.8 172.0,25.2 173.0,25.5 174.0,25.8 175.0,25.5 176.0,25.2 177.0,25.6 178.0,25.0 179.0,25.4 180.0,25.3 181.0,25.0 182.0,25.7 183.0,25.4 184.0,25.3 185.0,25.7 186.0,25.2 187.0,25.6 188.0,25.2 189.0,25.6 190.0,25.3 191.0,24.9 192.0,25.3 193.0,25.6 194.0,25.0 195.0,25.5 196.0,24.9 197.0,25.1 198.0,25.2 199.0,25.4 200.0,25.5 201.0,25.3 202.0,25.6 203.0,25.4 204.0,25.1 205.0,25.3 206.0,25.0 207.0,25.5 208.0,25.1 209.0,25.3 210.0,25.5 211.0,25.1 212.0,25.3 213.0,25.0 214.0,25.0 215.0,25.4 216.0,25.1 217.0,24.8 218.0,25.5 219.0,25.2 220.0,25.1 221.0,25.0 222.0,24.8 223.0,25.4 224.0,24.7 225.0,24.9 226.0,25.1 227.0,25.2 228.0,25.3 229.0,25.0 230.0,24.7 231.0,25.0 232.0,25.2 233.0,25.0 234.0,25.3 235.0,25.3 236.0,24.7 237.0,25.0 238.0,24.6 239.0,25.0 240.0,25.2 241.0,24.9 242.0,25.1 243.0,24.9 244.0,25.7 245.0,25.9 246.0,26.2 247.0,25.8 248.0,26.5 249.0,27.0 250.0,27.3" fill="none" stroke="#0c0c84" stroke-width="3" stroke-linejoin="round"/>
<polyline points="250.0,27.3 251.0,27.5 252.0,28.0 253.0,27.6 254.0,28.0 255.0,28.7 256.0,29.0 257.0,28.8 258.0,29.4 259.0,30.0 260.0,30.3 261.0,30.6 262.0,30.6 263.0,31.0 264.0,31.1 265.0,31.9 266.0,32.0 267.0,31.9 268.0,32.7 269.0,32.7 270.0,33.4 271.0,33.2 272.0,33.5 273.0,34.1 274.0,34.6 275.0,34.2 276.0,34.4 277.0,35.1 278.0,35.2 279.0,35.6 280.0,35.7 281.0,36.4 282.0,36.7 283.0,36.9 284.0,37.3 285.0,37.0 286.0,37.3 287.0,38.1 288.0,37.9 289.0,38.1 290.0,38.5 291.0,38.5 292.0,39.6 293.0,39.8 294.0,39.6 295.0,39.8 296.0,40.3 297.0,40.6 298.0,40.4 299.0,40.9 300.0,40.9 301.0,41.1 302.0,41.2 303.0,41.2 304.0,41.5 305.0,41.9 306.0,41.5 307.0,41.7 308.0,42.1 309.0,42.5 310.0,42.0 311.0,42.1 312.0,42.6 313.0,42.5 314.0,43.3 315.0,42.9 316.0,43.2 317.0,43.6 318.0,43.5 319.0,43.7 320.0,44.2 321.0,44.1 322.0,44.2 323.0,43.8 324.0,44.3 325.0,44.3 326.0,44.4 327.0,44.3 328.0,44.9 329.0,45.0 330.0,44.7 331.0,44.6 332.0,44.9 333.0,45.2 334.0,44.9 335.0,45.5 336.0,45.2 337.0,45.4 338.0,45.1 339.0,45.2 340.0,45.7 341.0,45.3 342.0,45.4 343.0,45.8 344.0,45.3 345.0,45.1" fill="none" stroke="#0e0e98" stroke-width="3.4" stroke-linejoin="round"/>
<polyline points="345.0,45.1 346.0,45.1 347.0,45.3 348.0,45.8 349.0,45.3 350.0,45.5 351.0,45.7 352.0,45.0 353.0,45.2 354.0,45.4 355.0,45.4 356.0,45.1 357.0,45.4 358.0,45.3 359.0,45.2 360.0,45.6 361.0,45.5 362.0,45.3 363.0,45.0 364.0,45.3 365.0,44.9 366.0,44.9 367.0,45.4 368.0,44.8 369.0,45.5 370.0,44.7 371.0,45.3 372.0,45.3 373.0,45.3 374.0,45.3 375.0,44.8 376.0,45.3 377.0,45.3 378.0,44.9 379.0,45.2 380.0,44.6 381.0,45.2 382.0,45.1 383.0,44.6 384.0,44.9 385.0,45.0 386.0,45.3 387.0,45.2 388.0,45.3 389.0,45.1 390.0,45.1 391.0,45.2 392.0,45.1 393.0,44.9 394.0,45.0 395.0,44.8 396.0,45.3 397.0,45.3 398.0,45.1 399.0,44.8 400.0,45.3 401.0,45.4 402.0,45.0 403.0,45.5 404.0,45.1 405.0,45.5 406.0,45.2 407.0,44.9 408.0,45.0 409.0,44.9 410.0,45.3 411.0,45.3 412.0,45.1 413.0,44.7 414.0,44.4 415.0,44.5 416.0,44.3 417.0,44.5 418.0,44.7 419.0,44.1 420.0,44.3 421.0,44.8 422.0,45.3 423.0,46.3 424.0,47.0 425.0,47.3 426.0,47.9 427.0,47.5 428.0,47.3 429.0,47.3 430.0,47.8 431.0,47.6 432.0,47.2 433.0,47.8 434.0,47.9 435.0,47.2 436.0,47.8 437.0,47.3 438.0,47.6 439.0,47.9 440.0,47.8 441.0,47.4 442.0,47.6 443.0,47.5 444.0,47.7 445.0,47.8 446.0,47.1 447.0,47.3 448.0,47.4 449.0,47.8 450.0,47.2 451.0,47.8 452.0,47.8 453.0,47.4 454.0,47.5 455.0,47.8 456.0,47.6 457.0,47.8 458.0,47.7 459.0,47.5 460.0,47.6 461.0,47.7 462.0,47.2 463.0,47.6 464.0,47.7 465.0,47.8 466.0,47.6 467.0,47.4 468.0,47.7 469.0,47.5 470.0,47.1 471.0,47.4 472.0,47.3 473.0,47.6 474.0,47.7 475.0,47.7 476.0,47.0 477.0,47.5 478.0,47.6 479.0,47.2 480.0,47.6 481.0,47.6 482.0,47.2 483.0,47.8 484.0,47.2 485.0,47.1 486.0,47.4 487.0,47.4 488.0,47.8 489.0,47.8 490.0,47.7 491.0,47.1 492.0,47.5 493.0,47.6 494.0,47.4 495.0,47.1 496.0,47.5 497.0,47.5 498.0,47.9 499.0,47.7 500.0,47.8 501.0,47.2 502.0,47.2 503.0,47.6 504.0,47.6 505.0,47.4 506.0,47.6 507.0,47.9 508.0,47.5 509.0,47.9 510.0,47.2 511.0,47.2 512.0,47.7 513.0,47.2 514.0,47.6 515.0,47.7 516.0,47.8 517.0,47.6 518.0,47.8 519.0,47.7 520.0,46.4 521.0,43.8 522.0,41.4 523.0,40.0 524.0,39.8 525.0,39.7 526.0,40.0 527.0,40.2 528.0,39.7 529.0,40.1 530.0,40.1 531.0,40.0 532.0,40.3 533.0,40.0 534.0,39.5 535.0,39.9 536.0,40.0 537.0,39.5 538.0,39.6 539.0,40.1 540.0,40.2 541.0,39.5 542.0,39.6 543.0,39.6 544.0,39.6 545.0,39.8 546.0,39.8 547.0,39.6 548.0,39.5 549.0,39.4 550.0,39.3 551.0,39.8 552.0,39.9 553.0,39.4 554.0,39.6 555.0,40.0 556.0,40.0 557.0,39.7 558.0,39.4 559.0,39.8 560.0,39.8 561.0,39.3 562.0,39.2 563.0,39.3 564.0,39.8 565.0,39.8 566.0,39.4 567.0,40.0 568.0,39.9 569.0,39.3 570.0,39.8 571.0,39.5 572.0,39.5 573.0,39.4 574.0,40.0 575.0,40.0 576.0,39.4 577.0,39.7 578.0,39.5 579.0,39.5 580.0,40.2 581.0,39.9 582.0,39.8 583.0,39.9 584.0,40.0 585.0,40.1 586.0,39.7 587.0,40.1 588.0,39.5 589.0,39.9 590.0,39.8 591.0,39.9 592.0,39.8 593.0,40.2 594.0,39.5 595.0,40.2 596.0,39.8 597.0,39.8 598.0,39.6 599.0,39.7 600.0,39.6 601.0,40.3 602.0,39.9 603.0,39.8 604.0,39.6 605.0,39.6 606.0,39.9 607.0,39.7 608.0,39.6 609.0,40.0 610.0,39.7 611.0,40.2 612.0,40.2 613.0,39.9 614.0,40.1 615.0,40.0 616.0,40.0 617.0,39.6 618.0,40.0 619.0,40.1 620.0,40.0 621.0,39.7 622.0,39.5 623.0,40.1 624.0,39.8 625.0,39.8 626.0,39.5 627.0,40.1 628.0,39.5 629.0,39.6 630.0,39.6 631.0,40.1 632.0,39.4 633.0,40.0 634.0,39.8 635.0,39.7 636.0,39.8 637.0,39.8 638.0,39.3 639.0,39.3 640.0,39.3 641.0,39.5 642.0,39.2 643.0,39.8 644.0,39.6 645.0,39.2 646.0,39.2 647.0,39.6 648.0,39.7 649.0,39.7 650.0,39.5 651.0,39.8 652.0,39.9 653.0,39.5 654.0,39.8 655.0,39.3 656.0,40.7 657.0,42.3 658.0,43.2 659.0,42.6 660.0,41.1 661.0,39.8 662.0,39.4 663.0,39.3 664.0,39.1 665.0,39.2 666.0,39.5 667.0,38.9 668.0,38.9 669.0,39.0 670.0,38.9 671.0,39.1 672.0,39.2 673.0,38.6 674.0,38.5 675.0,39.0 676.0,38.9 677.0,38.6 678.0,38.5 679.0,38.3 680.0,38.6 681.0,38.8 682.0,38.1 683.0,38.2 684.0,38.1 685.0,38.4 686.0,37.9 687.0,38.1 688.0,38.0 689.0,38.5 690.0,38.4 691.0,37.9 692.0,38.0 693.0,37.7 694.0,37.8 695.0,38.0 696.0,37.7 697.0,37.5 698.0,37.8 699.0,37.9 700.0,37.9 701.0,37.3 702.0,37.8 703.0,37.9 704.0,37.2 705.0,37.7 706.0,37.9 707.0,37.8 708.0,37.8 709.0,37.3 710.0,37.8 711.0,37.3 712.0,37.1 713.0,37.2 714.0,37.4 715.0,37.4 716.0,37.3 717.0,37.5 718.0,37.5 719.0,37.2 720.0,37.5 721.0,37.5 722.0,37.4 723.0,37.4 724.0,37.8 725.0,37.8 726.0,37.4 727.0,37.1 728.0,37.2 729.0,37.2 730.0,37.4 731.0,37.2 732.0,37.3 733.0,37.0 734.0,37.4 735.0,37.4 736.0,37.1 737.0,37.4 738.0,37.7 739.0,37.7 740.0,37.2 741.0,37.0 742.0,37.3 743.0,37.0 744.0,37.3 745.0,37.3 746.0,37.1 747.0,37.0 748.0,37.3 749.0,37.2 750.0,37.6 751.0,37.5 752.0,37.0 753.0,37.5 754.0,37.3 755.0,36.9 756.0,37.1 757.0,37.5 758.0,36.9 759.0,37.4 760.0,37.2 761.0,37.1 762.0,37.3 763.0,37.5 764.0,37.6 765.0,37.8 766.0,37.6 767.0,38.9 768.0,39.6 769.0,39.3 770.0,38.6 771.0,37.6 772.0,37.2 773.0,37.4 774.0,37.4 775.0,37.9 776.0,37.4 777.0,37.2 778.0,37.9 779.0,37.7 780.0,37.7 781.0,37.8 782.0,37.2 783.0,37.6 784.0,37.8 785.0,37.6 786.0,37.9 787.0,37.5 788.0,38.1 789.0,38.0 790.0,37.5 791.0,37.6 792.0,37.5 793.0,37.4 794.0,37.4 795.0,37.5 796.0,37.6 797.0,37.8 798.0,37.4 799.0,37.7 800.0,38.1 801.0,38.0 802.0,37.9 803.0,37.5 804.0,38.1 805.0,37.5 806.0,37.7 807.0,37.6 808.0,37.9 809.0,37.5 810.0,38.1 811.0,37.9 812.0,37.3 813.0,37.4 814.0,37.6 815.0,37.8 816.0,37.7 817.0,37.8 818.0,37.4 819.0,37.9 820.0,37.3 821.0,37.8 822.0,37.7 823.0,37.6 824.0,37.6 825.0,37.5 826.0,37.3 827.0,37.6 828.0,37.3 829.0,37.4 830.0,37.8 831.0,37.9 832.0,37.1 833.0,37.2 834.0,37.6 835.0,37.1 836.0,37.2 837.0,36.9 838.0,37.5 839.0,37.4 840.0,36.9 841.0,37.2 842.0,36.8 843.0,36.8 844.0,37.2" fill="none" stroke="#0a0a74" stroke-width="5.6" stroke-linejoin="round"/>
<polyline points="345.0,45.1 346.0,45.1 347.0,45.3 348.0,45.8 349.0,45.3 350.0,45.5 351.0,45.7 352.0,45.0 353.0,45.2 354.0,45.4 355.0,45.4 356.0,45.1 357.0,45.4 358.0,45.3 359.0,45.2 360.0,45.6 361.0,45.5 362.0,45.3 363.0,45.0 364.0,45.3 365.0,44.9 366.0,44.9 367.0,45.4 368.0,44.8 369.0,45.5 370.0,44.7 371.0,45.3 372.0,45.3 373.0,45.3 374.0,45.3 375.0,44.8 376.0,45.3 377.0,45.3 378.0,44.9 379.0,45.2 380.0,44.6 381.0,45.2 382.0,45.1 383.0,44.6 384.0,44.9 385.0,45.0 386.0,45.3 387.0,45.2 388.0,45.3 389.0,45.1 390.0,45.1 391.0,45.2 392.0,45.1 393.0,44.9 394.0,45.0 395.0,44.8 396.0,45.3 397.0,45.3 398.0,45.1 399.0,44.8 400.0,45.3 401.0,45.4 402.0,45.0 403.0,45.5 404.0,45.1 405.0,45.5 406.0,45.2 407.0,44.9 408.0,45.0 409.0,44.9 410.0,45.3 411.0,45.3 412.0,45.1 413.0,44.7 414.0,44.4 415.0,44.5 416.0,44.3 417.0,44.5 418.0,44.7 419.0,44.1 420.0,44.3 421.0,44.8 422.0,45.3 423.0,46.3 424.0,47.0 425.0,47.3 426.0,47.9 427.0,47.5 428.0,47.3 429.0,47.3 430.0,47.8 431.0,47.6 432.0,47.2 433.0,47.8 434.0,47.9 435.0,47.2 436.0,47.8 437.0,47.3 438.0,47.6 439.0,47.9 440.0,47.8 441.0,47.4 442.0,47.6 443.0,47.5 444.0,47.7 445.0,47.8 446.0,47.1 447.0,47.3 448.0,47.4 449.0,47.8 450.0,47.2 451.0,47.8 452.0,47.8 453.0,47.4 454.0,47.5 455.0,47.8 456.0,47.6 457.0,47.8 458.0,47.7 459.0,47.5 460.0,47.6 461.0,47.7 462.0,47.2 463.0,47.6 464.0,47.7 465.0,47.8 466.0,47.6 467.0,47.4 468.0,47.7 469.0,47.5 470.0,47.1 471.0,47.4 472.0,47.3 473.0,47.6 474.0,47.7 475.0,47.7 476.0,47.0 477.0,47.5 478.0,47.6 479.0,47.2 480.0,47.6 481.0,47.6 482.0,47.2 483.0,47.8 484.0,47.2 485.0,47.1 486.0,47.4 487.0,47.4 488.0,47.8 489.0,47.8 490.0,47.7 491.0,47.1 492.0,47.5 493.0,47.6 494.0,47.4 495.0,47.1 496.0,47.5 497.0,47.5 498.0,47.9 499.0,47.7 500.0,47.8 501.0,47.2 502.0,47.2 503.0,47.6 504.0,47.6 505.0,47.4 506.0,47.6 507.0,47.9 508.0,47.5 509.0,47.9 510.0,47.2 511.0,47.2 512.0,47.7 513.0,47.2 514.0,47.6 515.0,47.7 516.0,47.8 517.0,47.6 518.0,47.8 519.0,47.7 520.0,46.4 521.0,43.8 522.0,41.4 523.0,40.0 524.0,39.8 525.0,39.7 526.0,40.0 527.0,40.2 528.0,39.7 529.0,40.1 530.0,40.1 531.0,40.0 532.0,40.3 533.0,40.0 534.0,39.5 535.0,39.9 536.0,40.0 537.0,39.5 538.0,39.6 539.0,40.1 540.0,40.2 541.0,39.5 542.0,39.6 543.0,39.6 544.0,39.6 545.0,39.8 546.0,39.8 547.0,39.6 548.0,39.5 549.0,39.4 550.0,39.3 551.0,39.8 552.0,39.9 553.0,39.4 554.0,39.6 555.0,40.0 556.0,40.0 557.0,39.7 558.0,39.4 559.0,39.8 560.0,39.8 561.0,39.3 562.0,39.2 563.0,39.3 564.0,39.8 565.0,39.8 566.0,39.4 567.0,40.0 568.0,39.9 569.0,39.3 570.0,39.8 571.0,39.5 572.0,39.5 573.0,39.4 574.0,40.0 575.0,40.0 576.0,39.4 577.0,39.7 578.0,39.5 579.0,39.5 580.0,40.2 581.0,39.9 582.0,39.8 583.0,39.9 584.0,40.0 585.0,40.1 586.0,39.7 587.0,40.1 588.0,39.5 589.0,39.9 590.0,39.8 591.0,39.9 592.0,39.8 593.0,40.2 594.0,39.5 595.0,40.2 596.0,39.8 597.0,39.8 598.0,39.6 599.0,39.7 600.0,39.6 601.0,40.3 602.0,39.9 603.0,39.8 604.0,39.6 605.0,39.6 606.0,39.9 607.0,39.7 608.0,39.6 609.0,40.0 610.0,39.7 611.0,40.2 612.0,40.2 613.0,39.9 614.0,40.1 615.0,40.0 616.0,40.0 617.0,39.6 618.0,40.0 619.0,40.1 620.0,40.0 621.0,39.7 622.0,39.5 623.0,40.1 624.0,39.8 625.0,39.8 626.0,39.5 627.0,40.1 628.0,39.5 629.0,39.6 630.0,39.6 631.0,40.1 632.0,39.4 633.0,40.0 634.0,39.8 635.0,39.7 636.0,39.8 637.0,39.8 638.0,39.3 639.0,39.3 640.0,39.3 641.0,39.5 642.0,39.2 643.0,39.8 644.0,39.6 645.0,39.2 646.0,39.2 647.0,39.6 648.0,39.7 649.0,39.7 650.0,39.5 651.0,39.8 652.0,39.9 653.0,39.5 654.0,39.8 655.0,39.3 656.0,40.7 657.0,42.3 658.0,43.2 659.0,42.6 660.0,41.1 661.0,39.8 662.0,39.4 663.0,39.3 664.0,39.1 665.0,39.2 666.0,39.5 667.0,38.9 668.0,38.9 669.0,39.0 670.0,38.9 671.0,39.1 672.0,39.2 673.0,38.6 674.0,38.5 675.0,39.0 676.0,38.9 677.0,38.6 678.0,38.5 679.0,38.3 680.0,38.6 681.0,38.8 682.0,38.1 683.0,38.2 684.0,38.1 685.0,38.4 686.0,37.9 687.0,38.1 688.0,38.0 689.0,38.5 690.0,38.4 691.0,37.9 692.0,38.0 693.0,37.7 694.0,37.8 695.0,38.0 696.0,37.7 697.0,37.5 698.0,37.8 699.0,37.9 700.0,37.9 701.0,37.3 702.0,37.8 703.0,37.9 704.0,37.2 705.0,37.7 706.0,37.9 707.0,37.8 708.0,37.8 709.0,37.3 710.0,37.8 711.0,37.3 712.0,37.1 713.0,37.2 714.0,37.4 715.0,37.4 716.0,37.3 717.0,37.5 718.0,37.5 719.0,37.2 720.0,37.5 721.0,37.5 722.0,37.4 723.0,37.4 724.0,37.8 725.0,37.8 726.0,37.4 727.0,37.1 728.0,37.2 729.0,37.2 730.0,37.4 731.0,37.2 732.0,37.3 733.0,37.0 734.0,37.4 735.0,37.4 736.0,37.1 737.0,37.4 738.0,37.7 739.0,37.7 740.0,37.2 741.0,37.0 742.0,37.3 743.0,37.0 744.0,37.3 745.0,37.3 746.0,37.1 747.0,37.0 748.0,37.3 749.0,37.2 750.0,37.6 751.0,37.5 752.0,37.0 753.0,37.5 754.0,37.3 755.0,36.9 756.0,37.1 757.0,37.5 758.0,36.9 759.0,37.4 760.0,37.2 761.0,37.1 762.0,37.3 763.0,37.5 764.0,37.6 765.0,37.8 766.0,37.6 767.0,38.9 768.0,39.6 769.0,39.3 770.0,38.6 771.0,37.6 772.0,37.2 773.0,37.4 774.0,37.4 775.0,37.9 776.0,37.4 777.0,37.2 778.0,37.9 779.0,37.7 780.0,37.7 781.0,37.8 782.0,37.2 783.0,37.6 784.0,37.8 785.0,37.6 786.0,37.9 787.0,37.5 788.0,38.1 789.0,38.0 790.0,37.5 791.0,37.6 792.0,37.5 793.0,37.4 794.0,37.4 795.0,37.5 796.0,37.6 797.0,37.8 798.0,37.4 799.0,37.7 800.0,38.1 801.0,38.0 802.0,37.9 803.0,37.5 804.0,38.1 805.0,37.5 806.0,37.7 807.0,37.6 808.0,37.9 809.0,37.5 810.0,38.1 811.0,37.9 812.0,37.3 813.0,37.4 814.0,37.6 815.0,37.8 816.0,37.7 817.0,37.8 818.0,37.4 819.0,37.9 820.0,37.3 821.0,37.8 822.0,37.7 823.0,37.6 824.0,37.6 825.0,37.5 826.0,37.3 827.0,37.6 828.0,37.3 829.0,37.4 830.0,37.8 831.0,37.9 832.0,37.1 833.0,37.2 834.0,37.6 835.0,37.1 836.0,37.2 837.0,36.9 838.0,37.5 839.0,37.4 840.0,36.9 841.0,37.2 842.0,36.8 843.0,36.8 844.0,37.2" fill="none" stroke="#1010a2" stroke-width="4" stroke-linejoin="round"/>
<rect x="116" y="25.7" width="2" height="1" fill="#a8c4f0"/><rect x="124" y="25.8" width="2" height="1" fill="#a8c4f0"/><rect x="144" y="25.5" width="2" height="1" fill="#a8c4f0"/><rect x="155" y="26.1" width="2" height="1" fill="#a8c4f0"/><rect x="174" y="25.4" width="3" height="1" fill="#a8c4f0"/><rect x="188" y="26.3" width="2" height="1" fill="#a8c4f0"/><rect x="201" y="25.7" width="1" height="1" fill="#a8c4f0"/><rect x="219" y="26.1" width="2" height="1" fill="#a8c4f0"/><rect x="237" y="26.0" width="6" height="1" fill="#a8c4f0"/><rect x="269" y="32.3" width="1" height="1" fill="#a8c4f0"/><rect x="272" y="33.2" width="1" height="1" fill="#a8c4f0"/><rect x="295" y="41.0" width="1" height="1" fill="#a8c4f0"/><rect x="322" y="43.6" width="3" height="1" fill="#a8c4f0"/><rect x="326" y="45.9" width="1" height="1" fill="#a8c4f0"/><rect x="329" y="45.1" width="1" height="1" fill="#a8c4f0"/><rect x="330" y="45.7" width="1" height="1" fill="#a8c4f0"/><rect x="336" y="45.7" width="1" height="1" fill="#a8c4f0"/><rect x="345" y="45.9" width="1" height="1" fill="#a8c4f0"/><rect x="347" y="46.9" width="1" height="1" fill="#a8c4f0"/><rect x="357" y="46.3" width="3" height="1" fill="#a8c4f0"/><rect x="360" y="46.8" width="1" height="1" fill="#a8c4f0"/><rect x="362" y="46.7" width="1" height="1" fill="#a8c4f0"/><rect x="368" y="44.6" width="2" height="1" fill="#a8c4f0"/><rect x="370" y="46.6" width="1" height="1" fill="#a8c4f0"/><rect x="371" y="44.6" width="1" height="1" fill="#a8c4f0"/><rect x="376" y="46.0" width="3" height="1" fill="#a8c4f0"/><rect x="377" y="46.5" width="1" height="1" fill="#a8c4f0"/><rect x="387" y="44.6" width="1" height="1" fill="#a8c4f0"/><rect x="395" y="46.6" width="1" height="1" fill="#a8c4f0"/><rect x="396" y="45.6" width="1" height="1" fill="#a8c4f0"/><rect x="410" y="45.5" width="2" height="1" fill="#a8c4f0"/><rect x="425" y="47.1" width="1" height="1" fill="#a8c4f0"/><rect x="428" y="49.1" width="1" height="1" fill="#a8c4f0"/><rect x="429" y="49.1" width="1" height="1" fill="#a8c4f0"/><rect x="431" y="49.1" width="1" height="1" fill="#a8c4f0"/><rect x="437" y="48.5" width="2" height="1" fill="#a8c4f0"/><rect x="438" y="48.0" width="1" height="1" fill="#a8c4f0"/><rect x="465" y="48.9" width="1" height="1" fill="#a8c4f0"/><rect x="467" y="48.9" width="1" height="1" fill="#a8c4f0"/><rect x="477" y="47.9" width="1" height="1" fill="#a8c4f0"/><rect x="479" y="48.9" width="2" height="1" fill="#a8c4f0"/><rect x="480" y="47.9" width="1" height="1" fill="#a8c4f0"/><rect x="490" y="47.0" width="3" height="1" fill="#a8c4f0"/><rect x="496" y="48.5" width="1" height="1" fill="#a8c4f0"/><rect x="515" y="49.1" width="1" height="1" fill="#a8c4f0"/><rect x="523" y="40.5" width="1" height="1" fill="#a8c4f0"/><rect x="526" y="41.5" width="1" height="1" fill="#a8c4f0"/><rect x="529" y="39.4" width="3" height="1" fill="#a8c4f0"/><rect x="542" y="41.3" width="2" height="1" fill="#a8c4f0"/><rect x="543" y="39.3" width="1" height="1" fill="#a8c4f0"/><rect x="544" y="40.8" width="1" height="1" fill="#a8c4f0"/><rect x="554" y="40.7" width="1" height="1" fill="#a8c4f0"/><rect x="560" y="41.1" width="1" height="1" fill="#a8c4f0"/><rect x="589" y="41.4" width="3" height="1" fill="#a8c4f0"/><rect x="605" y="40.5" width="1" height="1" fill="#a8c4f0"/><rect x="617" y="39.3" width="3" height="1" fill="#a8c4f0"/><rect x="624" y="40.3" width="1" height="1" fill="#a8c4f0"/><rect x="659" y="42.7" width="1" height="1" fill="#a8c4f0"/><rect x="668" y="38.7" width="1" height="1" fill="#a8c4f0"/><rect x="677" y="39.7" width="3" height="1" fill="#a8c4f0"/><rect x="691" y="39.5" width="1" height="1" fill="#a8c4f0"/><rect x="695" y="39.3" width="2" height="1" fill="#a8c4f0"/><rect x="704" y="37.1" width="1" height="1" fill="#a8c4f0"/><rect x="713" y="38.5" width="1" height="1" fill="#a8c4f0"/><rect x="714" y="38.5" width="1" height="1" fill="#a8c4f0"/><rect x="721" y="38.5" width="2" height="1" fill="#a8c4f0"/><rect x="727" y="36.9" width="3" height="1" fill="#a8c4f0"/><rect x="729" y="38.4" width="2" height="1" fill="#a8c4f0"/><rect x="732" y="38.4" width="1" height="1" fill="#a8c4f0"/><rect x="733" y="38.9" width="3" height="1" fill="#a8c4f0"/><rect x="737" y="38.4" width="2" height="1" fill="#a8c4f0"/><rect x="747" y="38.3" width="1" height="1" fill="#a8c4f0"/><rect x="752" y="38.8" width="2" height="1" fill="#a8c4f0"/><rect x="754" y="36.7" width="2" height="1" fill="#a8c4f0"/><rect x="770" y="39.8" width="1" height="1" fill="#a8c4f0"/><rect x="788" y="39.2" width="3" height="1" fill="#a8c4f0"/><rect x="801" y="37.3" width="1" height="1" fill="#a8c4f0"/><rect x="807" y="38.7" width="1" height="1" fill="#a8c4f0"/><rect x="814" y="37.2" width="3" height="1" fill="#a8c4f0"/><rect x="816" y="39.1" width="1" height="1" fill="#a8c4f0"/><rect x="817" y="39.1" width="1" height="1" fill="#a8c4f0"/><rect x="832" y="38.4" width="3" height="1" fill="#a8c4f0"/>
<rect x="96" y="69" width="749" height="2" fill="#a66a4e"/>
<polyline points="96.0,115.6 240.0,115.6 245.0,114.0" fill="none" stroke="#5a12a0" stroke-width="2" stroke-linejoin="round"/>
<rect x="126" y="114" width="1" height="1" fill="#b8a8d8"/><rect x="129" y="114" width="1" height="1" fill="#b8a8d8"/><rect x="158" y="114" width="1" height="1" fill="#b8a8d8"/><rect x="161" y="114" width="1" height="1" fill="#b8a8d8"/><rect x="172" y="114" width="1" height="1" fill="#b8a8d8"/><rect x="177" y="114" width="1" height="1" fill="#b8a8d8"/><rect x="181" y="114" width="1" height="1" fill="#b8a8d8"/><rect x="210" y="114" width="1" height="1" fill="#b8a8d8"/><rect x="212" y="114" width="1" height="1" fill="#b8a8d8"/><rect x="219" y="114" width="1" height="1" fill="#b8a8d8"/><rect x="222" y="114" width="1" height="1" fill="#b8a8d8"/><rect x="225" y="114" width="1" height="1" fill="#b8a8d8"/><rect x="236" y="114" width="1" height="1" fill="#b8a8d8"/><rect x="238" y="114" width="1" height="1" fill="#b8a8d8"/>
<polyline points="240.0,115.6 245.0,114.0 248.0,110.0 252.0,103.0 259.4,70.0 263.3,58.8 265.5,49.0 266.8,46.3 268.2,49.0 272.0,58.8 277.7,70.0 282.0,74.3 286.5,76.0" fill="none" stroke="#7614ac" stroke-width="2.2" stroke-linejoin="round"/>
<polyline points="286.0,76.0 287.0,75.8 288.0,76.1 289.0,75.5 290.0,75.5 291.0,76.1 292.0,75.8 293.0,76.0 294.0,75.6 295.0,75.1 296.0,75.0 297.0,75.2 298.0,75.1 299.0,75.7 300.0,75.3 301.0,75.1 302.0,75.1 303.0,75.2 304.0,74.6 305.0,74.6 306.0,74.4 307.0,74.6 308.0,74.5 309.0,74.5 310.0,73.7 311.0,73.7 312.0,74.2 313.0,73.6 314.0,73.2 315.0,73.2 316.0,72.8 317.0,72.8 318.0,72.9 319.0,73.1 320.0,72.7 321.0,72.5 322.0,72.5 323.0,72.5 324.0,72.5 325.0,72.4 326.0,72.2 327.0,71.8 328.0,71.4 329.0,71.6 330.0,71.9 331.0,71.8 332.0,71.0 333.0,71.5 334.0,71.1 335.0,70.8 336.0,71.4 337.0,70.6 338.0,71.2 339.0,70.9 340.0,70.4 341.0,70.6 342.0,70.8 343.0,70.2 344.0,70.2 345.0,69.9" fill="none" stroke="#7a14a4" stroke-width="3" stroke-linejoin="round"/>
<polyline points="345.0,69.9 346.0,69.9 347.0,70.1 348.0,70.3 349.0,69.7 350.0,70.1 351.0,70.1 352.0,69.5 353.0,69.9 354.0,69.2 355.0,69.5 356.0,69.5 357.0,69.7 358.0,69.5 359.0,68.9 360.0,69.3 361.0,68.7 362.0,69.4 363.0,68.9 364.0,68.9 365.0,69.1 366.0,69.0 367.0,68.6 368.0,68.9 369.0,68.3 370.0,68.2 371.0,68.8 372.0,68.3 373.0,68.5 374.0,68.3 375.0,68.1 376.0,67.9 377.0,68.4 378.0,68.5 379.0,67.8 380.0,68.2 381.0,67.8 382.0,68.2 383.0,68.0 384.0,67.6 385.0,68.3 386.0,68.2 387.0,67.8 388.0,68.1 389.0,67.9 390.0,67.3 391.0,67.6 392.0,67.9 393.0,68.0 394.0,67.7 395.0,67.6 396.0,67.6 397.0,66.7 398.0,66.6 399.0,66.1" fill="none" stroke="#64108a" stroke-width="4.4" stroke-linejoin="round"/>
<polyline points="345.0,69.9 346.0,69.9 347.0,70.1 348.0,70.3 349.0,69.7 350.0,70.1 351.0,70.1 352.0,69.5 353.0,69.9 354.0,69.2 355.0,69.5 356.0,69.5 357.0,69.7 358.0,69.5 359.0,68.9 360.0,69.3 361.0,68.7 362.0,69.4 363.0,68.9 364.0,68.9 365.0,69.1 366.0,69.0 367.0,68.6 368.0,68.9 369.0,68.3 370.0,68.2 371.0,68.8 372.0,68.3 373.0,68.5 374.0,68.3 375.0,68.1 376.0,67.9 377.0,68.4 378.0,68.5 379.0,67.8 380.0,68.2 381.0,67.8 382.0,68.2 383.0,68.0 384.0,67.6 385.0,68.3 386.0,68.2 387.0,67.8 388.0,68.1 389.0,67.9 390.0,67.3 391.0,67.6 392.0,67.9 393.0,68.0 394.0,67.7 395.0,67.6 396.0,67.6 397.0,66.7 398.0,66.6 399.0,66.1" fill="none" stroke="#9418a8" stroke-width="2.6" stroke-linejoin="round"/>
<polyline points="399.0,66.5 401.0,61.0 402.6,56.5 403.5,55.4 404.4,56.5 406.0,61.0 408.0,67.0 411.0,72.0 416.0,75.6" fill="none" stroke="#7a16aa" stroke-width="2.2" stroke-linejoin="round"/>
<polyline points="413.0,73.7 414.0,73.9 415.0,74.6 416.0,75.2 417.0,76.3 418.0,76.1 419.0,76.3 420.0,76.6 421.0,76.4 422.0,76.7 423.0,77.8 424.0,78.1 425.0,77.3 426.0,77.8 427.0,78.0 428.0,76.9 429.0,77.0 430.0,77.4 431.0,76.8 432.0,77.0 433.0,76.3 434.0,76.2 435.0,75.9 436.0,76.0 437.0,75.3 438.0,75.2 439.0,76.2 440.0,75.5 441.0,76.5 442.0,76.0 443.0,76.4 444.0,76.4 445.0,76.8 446.0,78.1 447.0,77.5 448.0,78.5 449.0,77.5 450.0,77.8 451.0,78.1 452.0,78.3 453.0,77.2 454.0,77.2 455.0,76.9 456.0,76.4 457.0,75.8 458.0,75.9 459.0,76.0 460.0,75.5 461.0,75.5 462.0,75.0 463.0,75.1 464.0,75.5 465.0,75.2 466.0,75.7 467.0,76.6 468.0,76.9 469.0,77.2 470.0,76.9 471.0,77.7 472.0,77.4 473.0,77.0 474.0,77.4 475.0,78.0 476.0,77.1 477.0,76.9 478.0,76.3 479.0,76.3 480.0,75.7 481.0,76.4 482.0,75.5 483.0,75.0 484.0,74.8 485.0,74.9 486.0,74.4 487.0,75.1 488.0,74.6 489.0,74.9 490.0,75.7 491.0,75.3 492.0,75.5 493.0,76.3 494.0,76.8 495.0,76.8 496.0,76.7 497.0,77.4 498.0,76.6 499.0,77.5 500.0,77.1 501.0,76.4 502.0,76.2 503.0,76.0 504.0,75.8 505.0,76.0 506.0,75.7 507.0,75.3 508.0,74.9 509.0,74.5 510.0,74.2 511.0,74.7 512.0,75.0 513.0,75.2 514.0,74.8 515.0,74.9 516.0,75.5 517.0,75.6 518.0,76.0 519.0,76.8 520.0,77.2 521.0,76.9 522.0,77.9 523.0,76.9 524.0,77.2 525.0,77.8 526.0,77.4 527.0,77.0 528.0,76.6 529.0,76.7 530.0,76.2 531.0,75.6 532.0,75.8 533.0,76.1 534.0,75.9 535.0,75.0 536.0,75.0 537.0,75.1 538.0,75.8 539.0,76.2 540.0,76.8 541.0,76.7 542.0,76.7 543.0,77.8 544.0,76.9 545.0,77.8 546.0,78.1 547.0,77.9 548.0,78.4 549.0,78.4 550.0,77.8 551.0,77.5 552.0,77.8 553.0,76.5 554.0,76.2 555.0,75.9 556.0,76.1 557.0,75.9 558.0,75.6 559.0,75.4 560.0,75.4 561.0,75.1 562.0,76.2 563.0,75.7 564.0,76.1 565.0,76.0 566.0,76.2 567.0,76.5 568.0,77.5 569.0,77.0 570.0,77.4 571.0,77.8 572.0,77.2 573.0,77.6 574.0,77.5 575.0,77.6 576.0,77.3 577.0,76.4 578.0,76.0 579.0,76.6 580.0,75.2 581.0,76.0 582.0,75.1 583.0,75.4 584.0,75.4 585.0,75.1 586.0,74.9 587.0,75.1 588.0,74.8 589.0,76.1 590.0,76.4 591.0,75.6 592.0,77.0 593.0,76.3 594.0,76.3 595.0,77.5 596.0,76.7 597.0,76.8 598.0,77.3 599.0,77.1 600.0,76.4 601.0,75.8 602.0,76.4 603.0,75.2 604.0,75.8 605.0,75.1 606.0,75.1 607.0,74.3 608.0,74.6 609.0,75.1 610.0,74.2 611.0,74.8 612.0,75.5 613.0,75.3 614.0,75.5 615.0,76.4 616.0,76.5 617.0,76.8 618.0,77.1 619.0,77.3 620.0,76.9 621.0,76.6 622.0,76.6 623.0,77.1 624.0,77.3 625.0,76.4 626.0,76.4 627.0,75.9 628.0,75.6 629.0,75.4 630.0,75.4 631.0,75.0 632.0,75.1 633.0,75.4 634.0,75.3 635.0,74.8 636.0,75.3 637.0,75.7 638.0,75.7 639.0,76.2 640.0,76.3 641.0,77.2 642.0,77.1 643.0,77.0 644.0,77.6 645.0,78.2 646.0,77.3 647.0,77.3 648.0,77.2 649.0,77.1 650.0,77.0 651.0,77.1 652.0,76.5 653.0,76.6 654.0,75.8 655.0,75.4 656.0,76.2 657.0,75.7 658.0,75.5 659.0,75.1 660.0,75.9 661.0,76.4 662.0,75.7 663.0,76.0 664.0,76.7 665.0,77.3 666.0,76.8 667.0,77.2 668.0,78.3 669.0,78.1 670.0,78.3 671.0,78.2 672.0,77.2 673.0,77.9 674.0,77.0 675.0,76.7 676.0,77.2 677.0,76.1 678.0,75.6 679.0,76.1 680.0,75.4 681.0,75.7 682.0,74.8 683.0,75.1 684.0,74.9 685.0,74.9 686.0,75.6 687.0,75.7 688.0,75.8 689.0,76.8 690.0,76.8 691.0,76.6 692.0,76.6 693.0,77.6 694.0,76.8 695.0,76.9 696.0,76.7 697.0,77.4 698.0,76.3 699.0,76.3 700.0,76.3 701.0,76.3 702.0,75.8 703.0,75.3 704.0,75.5 705.0,74.7 706.0,75.2 707.0,75.0 708.0,75.1 709.0,74.8 710.0,74.7 711.0,74.8 712.0,75.8 713.0,75.3 714.0,75.9 715.0,76.4 716.0,77.2 717.0,77.0 718.0,77.2 719.0,76.6 720.0,76.4 721.0,76.8 722.0,76.9 723.0,76.0 724.0,76.1 725.0,75.6 726.0,75.9 727.0,75.4 728.0,75.1 729.0,75.0 730.0,75.2 731.0,75.3 732.0,75.0 733.0,75.1 734.0,74.9 735.0,75.8 736.0,75.2 737.0,75.8 738.0,76.2 739.0,76.9 740.0,77.3 741.0,77.7 742.0,77.7 743.0,77.5 744.0,77.1 745.0,77.4 746.0,77.7 747.0,77.7 748.0,77.7 749.0,76.7 750.0,76.8 751.0,76.0 752.0,75.8 753.0,75.2 754.0,75.7 755.0,75.3 756.0,75.4 757.0,75.5 758.0,75.8 759.0,76.4 760.0,76.6 761.0,76.2 762.0,77.1 763.0,76.9 764.0,77.3 765.0,77.9 766.0,78.1 767.0,77.6 768.0,77.5 769.0,77.6 770.0,78.3 771.0,77.1 772.0,77.0 773.0,77.0 774.0,76.7 775.0,77.1 776.0,76.0 777.0,75.5 778.0,75.3 779.0,75.7 780.0,75.7 781.0,75.3 782.0,75.0 783.0,75.8 784.0,75.5 785.0,75.5 786.0,75.9 787.0,76.1 788.0,76.8 789.0,76.7 790.0,77.6 791.0,77.5 792.0,77.0 793.0,77.2 794.0,77.4 795.0,77.8 796.0,77.6 797.0,77.3 798.0,76.3 799.0,75.7 800.0,76.1 801.0,75.7 802.0,74.7 803.0,74.8 804.0,74.4 805.0,74.2 806.0,75.1 807.0,74.5 808.0,75.2 809.0,75.4 810.0,75.2 811.0,75.4 812.0,76.4 813.0,76.8 814.0,76.3 815.0,76.8 816.0,77.3 817.0,77.5 818.0,76.5 819.0,77.0 820.0,76.7 821.0,76.9 822.0,75.7 823.0,75.9 824.0,75.3 825.0,75.3 826.0,75.7 827.0,75.4 828.0,74.2 829.0,74.4 830.0,74.5 831.0,74.7 832.0,75.2 833.0,75.1 834.0,75.3 835.0,75.5 836.0,76.3 837.0,76.5 838.0,76.8 839.0,76.8 840.0,77.2 841.0,77.6 842.0,77.3 843.0,76.8 844.0,77.4" fill="none" stroke="#5c1080" stroke-width="4.6" stroke-linejoin="round"/>
<polyline points="413.0,73.7 414.0,73.9 415.0,74.6 416.0,75.2 417.0,76.3 418.0,76.1 419.0,76.3 420.0,76.6 421.0,76.4 422.0,76.7 423.0,77.8 424.0,78.1 425.0,77.3 426.0,77.8 427.0,78.0 428.0,76.9 429.0,77.0 430.0,77.4 431.0,76.8 432.0,77.0 433.0,76.3 434.0,76.2 435.0,75.9 436.0,76.0 437.0,75.3 438.0,75.2 439.0,76.2 440.0,75.5 441.0,76.5 442.0,76.0 443.0,76.4 444.0,76.4 445.0,76.8 446.0,78.1 447.0,77.5 448.0,78.5 449.0,77.5 450.0,77.8 451.0,78.1 452.0,78.3 453.0,77.2 454.0,77.2 455.0,76.9 456.0,76.4 457.0,75.8 458.0,75.9 459.0,76.0 460.0,75.5 461.0,75.5 462.0,75.0 463.0,75.1 464.0,75.5 465.0,75.2 466.0,75.7 467.0,76.6 468.0,76.9 469.0,77.2 470.0,76.9 471.0,77.7 472.0,77.4 473.0,77.0 474.0,77.4 475.0,78.0 476.0,77.1 477.0,76.9 478.0,76.3 479.0,76.3 480.0,75.7 481.0,76.4 482.0,75.5 483.0,75.0 484.0,74.8 485.0,74.9 486.0,74.4 487.0,75.1 488.0,74.6 489.0,74.9 490.0,75.7 491.0,75.3 492.0,75.5 493.0,76.3 494.0,76.8 495.0,76.8 496.0,76.7 497.0,77.4 498.0,76.6 499.0,77.5 500.0,77.1 501.0,76.4 502.0,76.2 503.0,76.0 504.0,75.8 505.0,76.0 506.0,75.7 507.0,75.3 508.0,74.9 509.0,74.5 510.0,74.2 511.0,74.7 512.0,75.0 513.0,75.2 514.0,74.8 515.0,74.9 516.0,75.5 517.0,75.6 518.0,76.0 519.0,76.8 520.0,77.2 521.0,76.9 522.0,77.9 523.0,76.9 524.0,77.2 525.0,77.8 526.0,77.4 527.0,77.0 528.0,76.6 529.0,76.7 530.0,76.2 531.0,75.6 532.0,75.8 533.0,76.1 534.0,75.9 535.0,75.0 536.0,75.0 537.0,75.1 538.0,75.8 539.0,76.2 540.0,76.8 541.0,76.7 542.0,76.7 543.0,77.8 544.0,76.9 545.0,77.8 546.0,78.1 547.0,77.9 548.0,78.4 549.0,78.4 550.0,77.8 551.0,77.5 552.0,77.8 553.0,76.5 554.0,76.2 555.0,75.9 556.0,76.1 557.0,75.9 558.0,75.6 559.0,75.4 560.0,75.4 561.0,75.1 562.0,76.2 563.0,75.7 564.0,76.1 565.0,76.0 566.0,76.2 567.0,76.5 568.0,77.5 569.0,77.0 570.0,77.4 571.0,77.8 572.0,77.2 573.0,77.6 574.0,77.5 575.0,77.6 576.0,77.3 577.0,76.4 578.0,76.0 579.0,76.6 580.0,75.2 581.0,76.0 582.0,75.1 583.0,75.4 584.0,75.4 585.0,75.1 586.0,74.9 587.0,75.1 588.0,74.8 589.0,76.1 590.0,76.4 591.0,75.6 592.0,77.0 593.0,76.3 594.0,76.3 595.0,77.5 596.0,76.7 597.0,76.8 598.0,77.3 599.0,77.1 600.0,76.4 601.0,75.8 602.0,76.4 603.0,75.2 604.0,75.8 605.0,75.1 606.0,75.1 607.0,74.3 608.0,74.6 609.0,75.1 610.0,74.2 611.0,74.8 612.0,75.5 613.0,75.3 614.0,75.5 615.0,76.4 616.0,76.5 617.0,76.8 618.0,77.1 619.0,77.3 620.0,76.9 621.0,76.6 622.0,76.6 623.0,77.1 624.0,77.3 625.0,76.4 626.0,76.4 627.0,75.9 628.0,75.6 629.0,75.4 630.0,75.4 631.0,75.0 632.0,75.1 633.0,75.4 634.0,75.3 635.0,74.8 636.0,75.3 637.0,75.7 638.0,75.7 639.0,76.2 640.0,76.3 641.0,77.2 642.0,77.1 643.0,77.0 644.0,77.6 645.0,78.2 646.0,77.3 647.0,77.3 648.0,77.2 649.0,77.1 650.0,77.0 651.0,77.1 652.0,76.5 653.0,76.6 654.0,75.8 655.0,75.4 656.0,76.2 657.0,75.7 658.0,75.5 659.0,75.1 660.0,75.9 661.0,76.4 662.0,75.7 663.0,76.0 664.0,76.7 665.0,77.3 666.0,76.8 667.0,77.2 668.0,78.3 669.0,78.1 670.0,78.3 671.0,78.2 672.0,77.2 673.0,77.9 674.0,77.0 675.0,76.7 676.0,77.2 677.0,76.1 678.0,75.6 679.0,76.1 680.0,75.4 681.0,75.7 682.0,74.8 683.0,75.1 684.0,74.9 685.0,74.9 686.0,75.6 687.0,75.7 688.0,75.8 689.0,76.8 690.0,76.8 691.0,76.6 692.0,76.6 693.0,77.6 694.0,76.8 695.0,76.9 696.0,76.7 697.0,77.4 698.0,76.3 699.0,76.3 700.0,76.3 701.0,76.3 702.0,75.8 703.0,75.3 704.0,75.5 705.0,74.7 706.0,75.2 707.0,75.0 708.0,75.1 709.0,74.8 710.0,74.7 711.0,74.8 712.0,75.8 713.0,75.3 714.0,75.9 715.0,76.4 716.0,77.2 717.0,77.0 718.0,77.2 719.0,76.6 720.0,76.4 721.0,76.8 722.0,76.9 723.0,76.0 724.0,76.1 725.0,75.6 726.0,75.9 727.0,75.4 728.0,75.1 729.0,75.0 730.0,75.2 731.0,75.3 732.0,75.0 733.0,75.1 734.0,74.9 735.0,75.8 736.0,75.2 737.0,75.8 738.0,76.2 739.0,76.9 740.0,77.3 741.0,77.7 742.0,77.7 743.0,77.5 744.0,77.1 745.0,77.4 746.0,77.7 747.0,77.7 748.0,77.7 749.0,76.7 750.0,76.8 751.0,76.0 752.0,75.8 753.0,75.2 754.0,75.7 755.0,75.3 756.0,75.4 757.0,75.5 758.0,75.8 759.0,76.4 760.0,76.6 761.0,76.2 762.0,77.1 763.0,76.9 764.0,77.3 765.0,77.9 766.0,78.1 767.0,77.6 768.0,77.5 769.0,77.6 770.0,78.3 771.0,77.1 772.0,77.0 773.0,77.0 774.0,76.7 775.0,77.1 776.0,76.0 777.0,75.5 778.0,75.3 779.0,75.7 780.0,75.7 781.0,75.3 782.0,75.0 783.0,75.8 784.0,75.5 785.0,75.5 786.0,75.9 787.0,76.1 788.0,76.8 789.0,76.7 790.0,77.6 791.0,77.5 792.0,77.0 793.0,77.2 794.0,77.4 795.0,77.8 796.0,77.6 797.0,77.3 798.0,76.3 799.0,75.7 800.0,76.1 801.0,75.7 802.0,74.7 803.0,74.8 804.0,74.4 805.0,74.2 806.0,75.1 807.0,74.5 808.0,75.2 809.0,75.4 810.0,75.2 811.0,75.4 812.0,76.4 813.0,76.8 814.0,76.3 815.0,76.8 816.0,77.3 817.0,77.5 818.0,76.5 819.0,77.0 820.0,76.7 821.0,76.9 822.0,75.7 823.0,75.9 824.0,75.3 825.0,75.3 826.0,75.7 827.0,75.4 828.0,74.2 829.0,74.4 830.0,74.5 831.0,74.7 832.0,75.2 833.0,75.1 834.0,75.3 835.0,75.5 836.0,76.3 837.0,76.5 838.0,76.8 839.0,76.8 840.0,77.2 841.0,77.6 842.0,77.3 843.0,76.8 844.0,77.4" fill="none" stroke="#8616a0" stroke-width="2.4" stroke-linejoin="round"/></g>
<rect x="246.4" y="21" width="2" height="189" fill="#1616a4"/><rect x="791.4" y="21" width="2" height="189" fill="#1616a4"/><g shape-rendering="crispEdges"><rect x="87" y="20" width="766" height="1" fill="#ffffff"/>
<rect x="93" y="20" width="1" height="188" fill="#ffffff"/>
<rect x="846" y="20" width="1" height="188" fill="#ffffff"/>
<rect x="87" y="20" width="7" height="1" fill="#ffffff"/>
<rect x="846" y="20" width="7" height="1" fill="#ffffff"/>
<rect x="91" y="25" width="3" height="1" fill="#ffffff"/>
<rect x="846" y="25" width="4" height="1" fill="#ffffff"/>
<rect x="91" y="29" width="3" height="1" fill="#ffffff"/>
<rect x="846" y="29" width="4" height="1" fill="#ffffff"/>
<rect x="91" y="34" width="3" height="1" fill="#ffffff"/>
<rect x="846" y="34" width="4" height="1" fill="#ffffff"/>
<rect x="91" y="39" width="3" height="1" fill="#ffffff"/>
<rect x="846" y="39" width="4" height="1" fill="#ffffff"/>
<rect x="87" y="43" width="7" height="1" fill="#ffffff"/>
<rect x="846" y="43" width="7" height="1" fill="#ffffff"/>
<rect x="91" y="48" width="3" height="1" fill="#ffffff"/>
<rect x="846" y="48" width="4" height="1" fill="#ffffff"/>
<rect x="91" y="53" width="3" height="1" fill="#ffffff"/>
<rect x="846" y="53" width="4" height="1" fill="#ffffff"/>
<rect x="91" y="57" width="3" height="1" fill="#ffffff"/>
<rect x="846" y="57" width="4" height="1" fill="#ffffff"/>
<rect x="91" y="62" width="3" height="1" fill="#ffffff"/>
<rect x="846" y="62" width="4" height="1" fill="#ffffff"/>
<rect x="87" y="67" width="7" height="1" fill="#ffffff"/>
<rect x="846" y="67" width="7" height="1" fill="#ffffff"/>
<rect x="91" y="71" width="3" height="1" fill="#ffffff"/>
<rect x="846" y="71" width="4" height="1" fill="#ffffff"/>
<rect x="91" y="76" width="3" height="1" fill="#ffffff"/>
<rect x="846" y="76" width="4" height="1" fill="#ffffff"/>
<rect x="91" y="81" width="3" height="1" fill="#ffffff"/>
<rect x="846" y="81" width="4" height="1" fill="#ffffff"/>
<rect x="91" y="86" width="3" height="1" fill="#ffffff"/>
<rect x="846" y="86" width="4" height="1" fill="#ffffff"/>
<rect x="87" y="90" width="7" height="1" fill="#ffffff"/>
<rect x="846" y="90" width="7" height="1" fill="#ffffff"/>
<rect x="91" y="95" width="3" height="1" fill="#ffffff"/>
<rect x="846" y="95" width="4" height="1" fill="#ffffff"/>
<rect x="91" y="100" width="3" height="1" fill="#ffffff"/>
<rect x="846" y="100" width="4" height="1" fill="#ffffff"/>
<rect x="91" y="104" width="3" height="1" fill="#ffffff"/>
<rect x="846" y="104" width="4" height="1" fill="#ffffff"/>
<rect x="91" y="109" width="3" height="1" fill="#ffffff"/>
<rect x="846" y="109" width="4" height="1" fill="#ffffff"/>
<rect x="87" y="114" width="7" height="1" fill="#ffffff"/>
<rect x="846" y="114" width="7" height="1" fill="#ffffff"/>
<rect x="91" y="118" width="3" height="1" fill="#ffffff"/>
<rect x="846" y="118" width="4" height="1" fill="#ffffff"/>
<rect x="91" y="123" width="3" height="1" fill="#ffffff"/>
<rect x="846" y="123" width="4" height="1" fill="#ffffff"/>
<rect x="91" y="128" width="3" height="1" fill="#ffffff"/>
<rect x="846" y="128" width="4" height="1" fill="#ffffff"/>
<rect x="91" y="132" width="3" height="1" fill="#ffffff"/>
<rect x="846" y="132" width="4" height="1" fill="#ffffff"/>
<rect x="87" y="137" width="7" height="1" fill="#ffffff"/>
<rect x="846" y="137" width="7" height="1" fill="#ffffff"/>
<rect x="91" y="142" width="3" height="1" fill="#ffffff"/>
<rect x="846" y="142" width="4" height="1" fill="#ffffff"/>
<rect x="91" y="146" width="3" height="1" fill="#ffffff"/>
<rect x="846" y="146" width="4" height="1" fill="#ffffff"/>
<rect x="91" y="151" width="3" height="1" fill="#ffffff"/>
<rect x="846" y="151" width="4" height="1" fill="#ffffff"/>
<rect x="91" y="156" width="3" height="1" fill="#ffffff"/>
<rect x="846" y="156" width="4" height="1" fill="#ffffff"/>
<rect x="87" y="160" width="7" height="1" fill="#ffffff"/>
<rect x="846" y="160" width="7" height="1" fill="#ffffff"/>
<rect x="91" y="165" width="3" height="1" fill="#ffffff"/>
<rect x="846" y="165" width="4" height="1" fill="#ffffff"/>
<rect x="91" y="170" width="3" height="1" fill="#ffffff"/>
<rect x="846" y="170" width="4" height="1" fill="#ffffff"/>
<rect x="91" y="174" width="3" height="1" fill="#ffffff"/>
<rect x="846" y="174" width="4" height="1" fill="#ffffff"/>
<rect x="91" y="179" width="3" height="1" fill="#ffffff"/>
<rect x="846" y="179" width="4" height="1" fill="#ffffff"/>
<rect x="87" y="184" width="7" height="1" fill="#ffffff"/>
<rect x="846" y="184" width="7" height="1" fill="#ffffff"/>
<rect x="91" y="188" width="3" height="1" fill="#ffffff"/>
<rect x="846" y="188" width="4" height="1" fill="#ffffff"/>
<rect x="91" y="193" width="3" height="1" fill="#ffffff"/>
<rect x="846" y="193" width="4" height="1" fill="#ffffff"/>
<rect x="91" y="198" width="3" height="1" fill="#ffffff"/>
<rect x="846" y="198" width="4" height="1" fill="#ffffff"/>
<rect x="91" y="203" width="3" height="1" fill="#ffffff"/>
<rect x="846" y="203" width="4" height="1" fill="#ffffff"/>
<rect x="87" y="207" width="7" height="1" fill="#ffffff"/>
<rect x="846" y="207" width="7" height="1" fill="#ffffff"/>
<rect x="96" y="212" width="748" height="1" fill="#ffffff"/>
<rect x="96" y="212" width="1" height="7" fill="#ffffff"/>
<rect x="134" y="212" width="1" height="3" fill="#ffffff"/>
<rect x="171" y="212" width="1" height="3" fill="#ffffff"/>
<rect x="208" y="212" width="1" height="3" fill="#ffffff"/>
<rect x="245" y="212" width="1" height="3" fill="#ffffff"/>
<rect x="283" y="212" width="1" height="7" fill="#ffffff"/>
<rect x="320" y="212" width="1" height="3" fill="#ffffff"/>
<rect x="357" y="212" width="1" height="3" fill="#ffffff"/>
<rect x="394" y="212" width="1" height="3" fill="#ffffff"/>
<rect x="432" y="212" width="1" height="3" fill="#ffffff"/>
<rect x="469" y="212" width="1" height="7" fill="#ffffff"/>
<rect x="506" y="212" width="1" height="3" fill="#ffffff"/>
<rect x="543" y="212" width="1" height="3" fill="#ffffff"/>
<rect x="581" y="212" width="1" height="3" fill="#ffffff"/>
<rect x="618" y="212" width="1" height="3" fill="#ffffff"/>
<rect x="655" y="212" width="1" height="7" fill="#ffffff"/>
<rect x="692" y="212" width="1" height="3" fill="#ffffff"/>
<rect x="730" y="212" width="1" height="3" fill="#ffffff"/>
<rect x="767" y="212" width="1" height="3" fill="#ffffff"/>
<rect x="804" y="212" width="1" height="3" fill="#ffffff"/>
<rect x="843" y="212" width="1" height="7" fill="#ffffff"/>
<ellipse cx="247" cy="15" rx="3.2" ry="5" fill="#fffff0"/>
<ellipse cx="792" cy="15" rx="3.2" ry="5" fill="#ffe818"/></g>
<g font-family="'Liberation Sans',sans-serif" font-size="14"><text transform="translate(81,26) scale(.9,1)" fill="#1c1cd0" text-anchor="end">101.00</text>
<text transform="translate(81,42) scale(.9,1)" fill="#c82424" text-anchor="end">101.00</text>
<text transform="translate(857.5,26) scale(.9,1)" fill="#38b83c" text-anchor="start">101.00</text>
<text transform="translate(857.5,42) scale(.9,1)" fill="#e8a888" text-anchor="start">101.00</text>
<text transform="translate(81,120) scale(.9,1)" fill="#1c1cd0" text-anchor="end">0.00</text>
<text transform="translate(81,136) scale(.9,1)" fill="#c82424" text-anchor="end">0.00</text>
<text transform="translate(857.5,120) scale(.9,1)" fill="#38b83c" text-anchor="start">0.00</text>
<text transform="translate(857.5,136) scale(.9,1)" fill="#e8a888" text-anchor="start">0.00</text>
<text transform="translate(81,198) scale(.9,1)" fill="#1c1cd0" text-anchor="end">-101.00</text>
<text transform="translate(81,214) scale(.9,1)" fill="#c82424" text-anchor="end">-101.00</text>
<text transform="translate(857.5,198) scale(.9,1)" fill="#38b83c" text-anchor="start">-101.00</text>
<text transform="translate(857.5,214) scale(.9,1)" fill="#e8a888" text-anchor="start">-101.00</text></g>
</svg>
<div class="abs" style="left:0;top:0;width:2px;height:542px;background:linear-gradient(90deg,#2c5aa0,#4a7cc4)"></div>
<div class="abs" style="left:2px;top:236px;width:913px;height:3px;background:linear-gradient(#fffffc,#fffffc 60%,#f4f2e6)"></div>
<div class="abs" style="left:2px;top:242px;width:913px;height:1px;background:#2a2a26"></div>
<div class="abs" style="left:2px;top:242px;width:1px;height:300px;background:#26262a"></div>
<div class="abs" style="left:3px;top:243px;width:912px;height:2px;background:#fbfaf2"></div>
<div id="tb" class="abs" style="left:0;top:244px;width:915px;height:34px"><svg width="915" height="34" viewBox="0 244 915 34" style="position:absolute;left:0;top:0;display:block"><rect x="5" y="249" width="1" height="22" fill="#fff"/><rect x="6" y="249" width="1" height="22" fill="#f4f2e8"/><rect x="7" y="249" width="1" height="22" fill="#c0bcac"/><rect x="5" y="270" width="3" height="1" fill="#c0bcac"/><g transform="translate(1,1)" fill="#fff" stroke="none"><path d="M19,254 L22.5,254 L31.3,259.3 L31.3,260.7 L22.5,266 L19,266 Z"/></g><g fill="#aca899"><path d="M19,254 L22.5,254 L31.3,259.3 L31.3,260.7 L22.5,266 L19,266 Z"/></g><g transform="translate(1,1)" fill="#fff" stroke="none"><rect x="42" y="254" width="12" height="12.6"/></g><g fill="#aca899"><rect x="42" y="254" width="12" height="12.6"/></g><rect x="43" y="255" width="1" height="1" fill="#fff"/><rect x="52" y="255" width="1" height="1" fill="#fff"/><rect x="62" y="251" width="1" height="18" fill="#b4b0a0"/><rect x="63" y="251" width="1" height="18" fill="#fbfaf4"/><g transform="translate(1,1)" fill="#fff" stroke="none"><path d="M71,254 L75,254 L75,259 L80,254 L83,254 L83,266 L80,266 L75,261 L75,266 L71,266 Z"/></g><g fill="#aca899"><path d="M71,254 L75,254 L75,259 L80,254 L83,254 L83,266 L80,266 L75,261 L75,266 L71,266 Z"/></g><path d="M94.5,260 L100,254.5 L101.2,257.3 L104.3,254.5 L105.5,254.5 L105.5,265.3 L104,265.3 L101,262.6 L100.2,265.3 L99,265.3 Z" fill="#eef0d0" stroke="#1c1c1c" stroke-width="1.25" stroke-linejoin="miter"/><path d="M96.5,260 L103,258.8 L103,261.4 Z" fill="#c8d878"/><rect x="99" y="266" width="1" height="1" fill="#c8c890"/><rect x="101" y="266" width="1" height="1" fill="#c8c890"/><g transform="translate(1,1)" fill="#fff" stroke="none"><path d="M117,254 L119.5,254 L123,257 L123,254 L125,254 L129,258.5 L129,261.5 L125,266 L123,266 L123,263 L119.5,266 L117,266 Z"/></g><g fill="#aca899"><path d="M117,254 L119.5,254 L123,257 L123,254 L125,254 L129,258.5 L129,261.5 L125,266 L123,266 L123,263 L119.5,266 L117,266 Z"/></g><g transform="translate(1,1)" fill="#fff" stroke="none"><path d="M140,254 L143,254 L148,259 L148,254 L152,254 L152,266 L148,266 L148,261 L143,266 L140,266 Z"/></g><g fill="#aca899"><path d="M140,254 L143,254 L148,259 L148,254 L152,254 L152,266 L148,266 L148,261 L143,266 L140,266 Z"/></g><rect x="160" y="251" width="1" height="18" fill="#b4b0a0"/><rect x="161" y="251" width="1" height="18" fill="#fbfaf4"/><rect x="164" y="249" width="23" height="22" fill="#f6f5ee"/><rect x="164" y="249" width="23" height="1" fill="#aca899"/><rect x="164" y="249" width="1" height="22" fill="#aca899"/><rect x="164" y="270" width="23" height="1" fill="#fff"/><rect x="186" y="249" width="1" height="22" fill="#fff"/><rect x="169.9" y="254.7" width="13.6" height="13.4" fill="#c2c2ca" stroke="#6a6a6a" stroke-width="1.6"/><path d="M183,263 L183,267.6 L178,267.6 Z" fill="#a8a8b0"/><rect x="191" y="264.2" width="14" height="1.8" fill="#2a2a72"/><rect x="192" y="256" width="1.7" height="9" fill="#2a2a72"/><rect x="197.2" y="259.3" width="1.7" height="6" fill="#2a2a72"/><rect x="202.4" y="256" width="1.7" height="9" fill="#2a2a72"/><g transform="translate(1,1)" fill="#fff" stroke="none"><path d="M214,252 L219.5,252 L219.5,256.5 L217,259 L216.5,259 L214,256.5 Z"/><rect x="213" y="260" width="16" height="1.2"/><path d="M222.3,262 L224,261.2 L227,261.2 L227,267.8 L222.3,267.8 Z"/></g><g fill="#aca899"><path d="M214,252 L219.5,252 L219.5,256.5 L217,259 L216.5,259 L214,256.5 Z"/><rect x="213" y="260" width="16" height="1.2"/><path d="M222.3,262 L224,261.2 L227,261.2 L227,267.8 L222.3,267.8 Z"/></g><rect x="235" y="251" width="1" height="18" fill="#b4b0a0"/><rect x="236" y="251" width="1" height="18" fill="#fbfaf4"/><path d="M246,252.5 L253,252.5 L253,256 L256.8,256 L256.8,263.3 L253,263.3 L253,267.3 L246,267.3 L246,263.3 L242.2,263.3 L242.2,256 L246,256 Z" fill="#5cf03c" stroke="#1c9420" stroke-width="1"/><path d="M246,267.5 L253,267.5 M242.2,263.6 L246,263.6 M253,263.6 L256.8,263.6" stroke="#063806" stroke-width="1" fill="none"/><rect x="247.5" y="254" width="4" height="11" fill="#80ff60" opacity=".6"/><rect x="265.4" y="256.2" width="14.4" height="7.2" fill="#62f044" stroke="#1c9420" stroke-width="1"/><rect x="265" y="263.4" width="15.2" height="1" fill="#063806"/><rect x="267" y="258" width="11" height="2.2" fill="#a0ff88" opacity=".7"/><rect x="287" y="251" width="1" height="18" fill="#b4b0a0"/><rect x="288" y="251" width="1" height="18" fill="#fbfaf4"/><rect x="294" y="252" width="16" height="15.7" fill="#a2a2a2"/><rect x="294" y="252" width="9.5" height="2.6" fill="#5e5e5e"/><rect x="303.5" y="252" width="6.5" height="2.6" fill="#8c8c8c"/><rect x="301" y="255" width="9" height="8" fill="#bcbcbc"/><path d="M298,254.2 L300.2,257.5 L299.6,257.5 L299.6,264.6 L296.4,264.6 L296.4,257.5 L295.8,257.5 Z" fill="#ececec" stroke="#0a0a0a" stroke-width="1"/><path d="M305.9,257 L308.2,260.4 L307.6,260.4 L307.6,267.3 L304.3,267.3 L304.3,260.4 L303.6,260.4 Z" fill="#ececec" stroke="#0a0a0a" stroke-width="1"/><rect x="317.3" y="252" width="15.7" height="15.7" fill="#b4b4b4"/><rect x="323" y="264.6" width="10" height="3.1" fill="#666"/><rect x="317.3" y="252" width="15.7" height="1.5" fill="#8a8a8a"/><rect x="317.3" y="263" width="6" height="4.7" fill="#9a9a9a"/><path d="M319.7,252.4 L322.7,252.4 L322.7,259 L323.4,259 L321.2,263 L319,259 L319.7,259 Z" fill="#c8c8c8" stroke="#2a2a2a" stroke-width="1"/><path d="M327.4,255.4 L330.6,255.4 L330.6,264.2 L327.4,264.2 Z" fill="#c4c4c4" stroke="#2a2a2a" stroke-width="1"/><rect x="324.2" y="258" width="2.6" height="3.6" fill="#d8d8d8"/><rect x="339" y="251" width="1" height="18" fill="#b4b0a0"/><rect x="340" y="251" width="1" height="18" fill="#fbfaf4"/><g font-family="'Liberation Serif',serif" font-weight="bold" font-size="14.5"><text transform="translate(347,265.8) scale(1.75,1)" fill="#fff">F</text><text transform="translate(346,264.8) scale(1.75,1)" fill="#aca899" stroke="#aca899" stroke-width=".9">F</text></g><rect x="368" y="251" width="1" height="18" fill="#b4b0a0"/><rect x="369" y="251" width="1" height="18" fill="#fbfaf4"/></svg></div>
<div class="abs" style="left:4px;top:278px;width:911px;height:1px;background:#8a8878"></div>
<div class="abs" style="left:3px;top:278px;width:2px;height:264px;background:#9c9a96"></div>
<div class="abs" style="left:5px;top:299px;width:910px;height:243px;background:#fff"></div>
<div id="tbl" class="abs" style="left:0;top:0;width:915px;height:542px;will-change:transform"><div class="hc" style="left:5px;width:20px;text-align:left;padding-left:7px"><span style="display:inline-block;transform:translate(-1px,-2px) scale(1.6,.9);transform-origin:0 55%">[</span></div>
<div class="hc" style="left:25px;width:10px;text-align:center;padding-left:0"></div>
<div class="hc" style="left:35px;width:150px;text-align:left;padding-left:5px">信号名称</div>
<div class="hc" style="left:185px;width:52px;text-align:left;padding-left:6px">连<span style="letter-spacing:-.4px">...</span></div>
<div class="hc" style="left:237px;width:70px;text-align:left;padding-left:6px">设备状<span style="letter-spacing:-.4px">...</span></div>
<div class="hc" style="left:307px;width:79px;text-align:center;padding-left:0">当前值</div>
<div class="hc" style="left:386px;width:100px;text-align:center;padding-left:0">左值</div>
<div class="hc" style="left:486px;width:76px;text-align:center;padding-left:0">右值</div>
<div class="hc" style="left:562px;width:70px;text-align:center;padding-left:0">差额</div>
<div class="hc" style="left:632px;width:85px;text-align:center;padding-left:0">时间间隔</div>
<div class="hc" style="left:717px;width:76px;text-align:center;padding-left:0">最大值</div>
<div class="hc" style="left:793px;width:52px;text-align:left;padding-left:4px">最<span style="letter-spacing:-.4px">...</span></div>
<div class="hc" style="left:845px;width:60px;text-align:center;padding-left:0">单位</div>
<div class="hc" style="left:905px;width:10px;border-right:0"></div>
<div class="gh" style="top:300px"></div>
<div class="gh" style="top:317px"></div>
<div class="gh" style="top:334px"></div>
<div class="gh" style="top:351px"></div>
<div class="gh" style="top:368px"></div>
<div class="gh" style="top:385px"></div>
<div class="gh" style="top:402px"></div>
<div class="gh" style="top:419px"></div>
<div class="gh" style="top:436px"></div>
<div class="gh" style="top:453px"></div>
<div class="gh" style="top:470px"></div>
<div class="gh" style="top:487px"></div>
<div class="gh" style="top:504px"></div>
<div class="gh" style="top:521px"></div>
<div class="gh" style="top:538px"></div>
<div class="gv" style="left:24px"></div>
<div class="gv" style="left:34px"></div>
<div class="gv" style="left:184px"></div>
<div class="gv" style="left:236px"></div>
<div class="gv" style="left:306px"></div>
<div class="gv" style="left:385px"></div>
<div class="gv" style="left:485px"></div>
<div class="gv" style="left:561px"></div>
<div class="gv" style="left:631px"></div>
<div class="gv" style="left:716px"></div>
<div class="gv" style="left:792px"></div>
<div class="gv" style="left:844px"></div>
<div class="gv" style="left:904px"></div>
<div class="row" style="top:300px">
<span class="cb"><svg width="13" height="13" viewBox="0 0 13 13"><rect x="1" y="1" width="11" height="11" fill="#fff" stroke="#000" stroke-width="2"/><path d="M3.2 6 L5.5 8.6 L10 3.4" fill="none" stroke="#000" stroke-width="2.1"/></svg></span>
<span class="sw" style="background:#f01010"></span>
<span class="nm">主机\运行频率</span>
<span class="c zh" style="left:185px;width:52px">断开</span>
<span class="c" style="left:386px;width:100px">0.63</span>
<span class="c" style="left:486px;width:76px">48.94</span>
<span class="c" style="left:562px;width:70px">48.31</span>
<span class="c" style="left:632px;width:85px">01:56:733</span>
<span class="c" style="left:717px;width:76px">49.22</span>
<span class="c" style="left:793px;width:52px">0.00</span>
<span class="c" style="left:845px;width:60px">HZ</span>
</div>
<div class="row" style="top:317px">
<span class="cb"><svg width="13" height="13" viewBox="0 0 13 13"><rect x="1" y="1" width="11" height="11" fill="#fff" stroke="#000" stroke-width="2"/><path d="M3.2 6 L5.5 8.6 L10 3.4" fill="none" stroke="#000" stroke-width="2.1"/></svg></span>
<span class="sw" style="background:#ffa000"></span>
<span class="nm">从机\运行频率</span>
<span class="c zh" style="left:185px;width:52px">断开</span>
<span class="c" style="left:386px;width:100px">0.71</span>
<span class="c" style="left:486px;width:76px">48.86</span>
<span class="c" style="left:562px;width:70px">48.15</span>
<span class="c" style="left:632px;width:85px">01:56:733</span>
<span class="c" style="left:717px;width:76px">49.19</span>
<span class="c" style="left:793px;width:52px">0.00</span>
<span class="c" style="left:845px;width:60px">HZ</span>
</div>
<div class="row" style="top:334px">
<span class="cb"><svg width="13" height="13" viewBox="0 0 13 13"><rect x="1" y="1" width="11" height="11" fill="#fff" stroke="#000" stroke-width="2"/><path d="M3.2 6 L5.5 8.6 L10 3.4" fill="none" stroke="#000" stroke-width="2.1"/></svg></span>
<span class="sw" style="background:#1010f0"></span>
<span class="nm">主机\设定频率</span>
<span class="c zh" style="left:185px;width:52px">断开</span>
<span class="c" style="left:386px;width:100px">49.00</span>
<span class="c" style="left:486px;width:76px">49.00</span>
<span class="c" style="left:562px;width:70px">0.00</span>
<span class="c" style="left:632px;width:85px">01:56:733</span>
<span class="c" style="left:717px;width:76px">49.00</span>
<span class="c" style="left:793px;width:52px">25.00</span>
<span class="c" style="left:845px;width:60px">HZ</span>
</div>
<div class="row" style="top:351px">
<span class="cb"><svg width="13" height="13" viewBox="0 0 13 13"><rect x="1" y="1" width="11" height="11" fill="#fff" stroke="#000" stroke-width="2"/><path d="M3.2 6 L5.5 8.6 L10 3.4" fill="none" stroke="#000" stroke-width="2.1"/></svg></span>
<span class="sw" style="background:#18f018"></span>
<span class="nm">主机\斜坡给定频率</span>
<span class="c zh" style="left:185px;width:52px">断开</span>
<span class="c" style="left:386px;width:100px">1.68</span>
<span class="c" style="left:486px;width:76px">49.00</span>
<span class="c" style="left:562px;width:70px">47.32</span>
<span class="c" style="left:632px;width:85px">01:56:733</span>
<span class="c" style="left:717px;width:76px">49.00</span>
<span class="c" style="left:793px;width:52px">0.00</span>
<span class="c" style="left:845px;width:60px">HZ</span>
</div>
<div class="row" style="top:368px">
<span class="cb"><svg width="13" height="13" viewBox="0 0 13 13"><rect x="1" y="1" width="11" height="11" fill="#fff" stroke="#000" stroke-width="2"/><path d="M3.2 6 L5.5 8.6 L10 3.4" fill="none" stroke="#000" stroke-width="2.1"/></svg></span>
<span class="sw" style="background:#f85040"></span>
<span class="nm">从机\斜坡给定频率</span>
<span class="c zh" style="left:185px;width:52px">断开</span>
<span class="c" style="left:386px;width:100px">1.69</span>
<span class="c" style="left:486px;width:76px">49.00</span>
<span class="c" style="left:562px;width:70px">47.31</span>
<span class="c" style="left:632px;width:85px">01:56:733</span>
<span class="c" style="left:717px;width:76px">49.00</span>
<span class="c" style="left:793px;width:52px">0.00</span>
<span class="c" style="left:845px;width:60px">HZ</span>
</div>
<div class="row" style="top:385px">
<span class="cb"><svg width="13" height="13" viewBox="0 0 13 13"><rect x="1" y="1" width="11" height="11" fill="#fff" stroke="#000" stroke-width="2"/><path d="M3.2 6 L5.5 8.6 L10 3.4" fill="none" stroke="#000" stroke-width="2.1"/></svg></span>
<span class="sw" style="background:#848408"></span>
<span class="nm">主机\输出电流</span>
<span class="c zh" style="left:185px;width:52px">断开</span>
<span class="c" style="left:386px;width:100px">42.4</span>
<span class="c" style="left:486px;width:76px">91.3</span>
<span class="c" style="left:562px;width:70px">48.9</span>
<span class="c" style="left:632px;width:85px">01:56:733</span>
<span class="c" style="left:717px;width:76px">180.0</span>
<span class="c" style="left:793px;width:52px">0.0</span>
<span class="c" style="left:845px;width:60px">A</span>
</div>
<div class="row" style="top:402px">
<span class="cb"><svg width="13" height="13" viewBox="0 0 13 13"><rect x="1" y="1" width="11" height="11" fill="#fff" stroke="#000" stroke-width="2"/><path d="M3.2 6 L5.5 8.6 L10 3.4" fill="none" stroke="#000" stroke-width="2.1"/></svg></span>
<span class="sw" style="background:#880808"></span>
<span class="nm">从机\输出电流</span>
<span class="c zh" style="left:185px;width:52px">断开</span>
<span class="c" style="left:386px;width:100px">40.9</span>
<span class="c" style="left:486px;width:76px">79.4</span>
<span class="c" style="left:562px;width:70px">38.5</span>
<span class="c" style="left:632px;width:85px">01:56:733</span>
<span class="c" style="left:717px;width:76px">251.1</span>
<span class="c" style="left:793px;width:52px">0.0</span>
<span class="c" style="left:845px;width:60px">A</span>
</div>
<div class="row" style="top:419px">
<span class="cb"><svg width="13" height="13" viewBox="0 0 13 13"><rect x="1" y="1" width="11" height="11" fill="#fff" stroke="#000" stroke-width="2"/><path d="M3.2 6 L5.5 8.6 L10 3.4" fill="none" stroke="#000" stroke-width="2.1"/></svg></span>
<span class="sw" style="background:#088408"></span>
<span class="nm">主机\输出电压</span>
<span class="c zh" style="left:185px;width:52px">断开</span>
<span class="c" style="left:386px;width:100px">9</span>
<span class="c" style="left:486px;width:76px">648</span>
<span class="c" style="left:562px;width:70px">639</span>
<span class="c" style="left:632px;width:85px">01:56:733</span>
<span class="c" style="left:717px;width:76px">652</span>
<span class="c" style="left:793px;width:52px">0</span>
<span class="c" style="left:845px;width:60px">V</span>
</div>
<div class="row" style="top:436px">
<span class="cb"><svg width="13" height="13" viewBox="0 0 13 13"><rect x="1" y="1" width="11" height="11" fill="#fff" stroke="#000" stroke-width="2"/><path d="M3.2 6 L5.5 8.6 L10 3.4" fill="none" stroke="#000" stroke-width="2.1"/></svg></span>
<span class="sw" style="background:#10f880"></span>
<span class="nm">从机\输出电压</span>
<span class="c zh" style="left:185px;width:52px">断开</span>
<span class="c" style="left:386px;width:100px">10</span>
<span class="c" style="left:486px;width:76px">646</span>
<span class="c" style="left:562px;width:70px">636</span>
<span class="c" style="left:632px;width:85px">01:56:733</span>
<span class="c" style="left:717px;width:76px">650</span>
<span class="c" style="left:793px;width:52px">0</span>
<span class="c" style="left:845px;width:60px">V</span>
</div>
<div class="row" style="top:453px">
<span class="cb"><svg width="13" height="13" viewBox="0 0 13 13"><rect x="1" y="1" width="11" height="11" fill="#fff" stroke="#000" stroke-width="2"/><path d="M3.2 6 L5.5 8.6 L10 3.4" fill="none" stroke="#000" stroke-width="2.1"/></svg></span>
<span class="sw" style="background:#48c8d0"></span>
<span class="nm">主机\母线电压</span>
<span class="c zh" style="left:185px;width:52px">断开</span>
<span class="c" style="left:386px;width:100px">971.1</span>
<span class="c" style="left:486px;width:76px">913.3</span>
<span class="c" style="left:562px;width:70px">-57.8</span>
<span class="c" style="left:632px;width:85px">01:56:733</span>
<span class="c" style="left:717px;width:76px">1200.6</span>
<span class="c" style="left:793px;width:52px">846.2</span>
<span class="c" style="left:845px;width:60px">V</span>
</div>
<div class="row" style="top:470px">
<span class="cb"><svg width="13" height="13" viewBox="0 0 13 13"><rect x="1" y="1" width="11" height="11" fill="#fff" stroke="#000" stroke-width="2"/><path d="M3.2 6 L5.5 8.6 L10 3.4" fill="none" stroke="#000" stroke-width="2.1"/></svg></span>
<span class="sw" style="background:#a0522d"></span>
<span class="nm">从机\设定频率</span>
<span class="c zh" style="left:185px;width:52px">断开</span>
<span class="c" style="left:386px;width:100px">49.00</span>
<span class="c" style="left:486px;width:76px">49.00</span>
<span class="c" style="left:562px;width:70px">0.00</span>
<span class="c" style="left:632px;width:85px">01:56:733</span>
<span class="c" style="left:717px;width:76px">49.00</span>
<span class="c" style="left:793px;width:52px">0.00</span>
<span class="c" style="left:845px;width:60px">HZ</span>
</div>
<div class="row" style="top:487px">
<span class="cb"><svg width="13" height="13" viewBox="0 0 13 13"><rect x="1" y="1" width="11" height="11" fill="#fff" stroke="#000" stroke-width="2"/><path d="M3.2 6 L5.5 8.6 L10 3.4" fill="none" stroke="#000" stroke-width="2.1"/></svg></span>
<span class="sw" style="background:#080888"></span>
<span class="nm">从机\母线电压</span>
<span class="c zh" style="left:185px;width:52px">断开</span>
<span class="c" style="left:386px;width:100px">970.8</span>
<span class="c" style="left:486px;width:76px">916.3</span>
<span class="c" style="left:562px;width:70px">-54.5</span>
<span class="c" style="left:632px;width:85px">01:56:733</span>
<span class="c" style="left:717px;width:76px">1047.1</span>
<span class="c" style="left:793px;width:52px">849.1</span>
<span class="c" style="left:845px;width:60px">V</span>
</div>
<div class="row" style="top:504px">
<span class="cb"><svg width="13" height="13" viewBox="0 0 13 13"><rect x="1" y="1" width="11" height="11" fill="#fff" stroke="#000" stroke-width="2"/><path d="M3.2 6 L5.5 8.6 L10 3.4" fill="none" stroke="#000" stroke-width="2.1"/></svg></span>
<span class="sw" style="background:#a010a0"></span>
<span class="nm">从机\转矩电流指令</span>
<span class="c zh" style="left:185px;width:52px">断开</span>
<span class="c" style="left:386px;width:100px">30.9</span>
<span class="c" style="left:486px;width:76px">97.2</span>
<span class="c" style="left:562px;width:70px">66.4</span>
<span class="c" style="left:632px;width:85px">01:56:733</span>
<span class="c" style="left:717px;width:76px">189.4</span>
<span class="c" style="left:793px;width:52px">0.0</span>
<span class="c" style="left:845px;width:60px">%</span>
</div>
<div class="row" style="top:521px">
<span class="cb"><svg width="13" height="13" viewBox="0 0 13 13"><rect x="1" y="1" width="11" height="11" fill="#fff" stroke="#000" stroke-width="2"/><path d="M3.2 6 L5.5 8.6 L10 3.4" fill="none" stroke="#000" stroke-width="2.1"/></svg></span>
<span class="sw" style="background:#5808a0"></span>
<span class="nm">主机\转矩电流指令</span>
<span class="c zh" style="left:185px;width:52px">断开</span>
<span class="c" style="left:386px;width:100px">32.5</span>
<span class="c" style="left:486px;width:76px">101.9</span>
<span class="c" style="left:562px;width:70px">69.4</span>
<span class="c" style="left:632px;width:85px">01:56:733</span>
<span class="c" style="left:717px;width:76px">178.3</span>
<span class="c" style="left:793px;width:52px">0.0</span>
<span class="c" style="left:845px;width:60px">%</span>
</div></div>
</body></html>
